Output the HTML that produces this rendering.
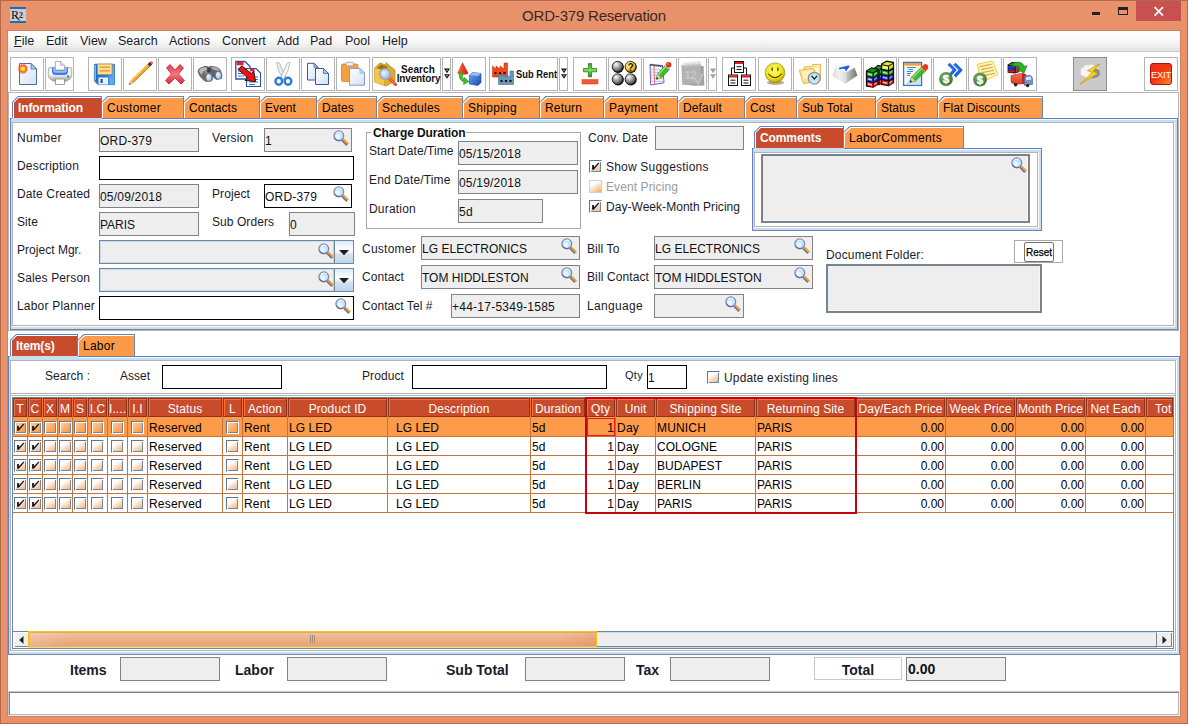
<!DOCTYPE html>
<html><head><meta charset="utf-8"><title>ORD-379 Reservation</title>
<style>
html,body{margin:0;padding:0;}
body{width:1188px;height:724px;overflow:hidden;position:relative;background:#E9916A;font-family:"Liberation Sans",sans-serif;font-size:12px;}
#w{position:absolute;left:0;top:0;width:1188px;height:724px;overflow:hidden;}
#w div,#w svg{position:absolute;box-sizing:border-box;}
#w svg text{font-family:"Liberation Sans",sans-serif;}
.cb{width:13px;height:13px;background:linear-gradient(148deg,#FFFFFF 0%,#FFFFFF 30%,#FDD6B6 62%,#FCA862 100%);border-top:1px solid #5C7894;border-left:1px solid #5C7894;border-right:1px solid #fff;border-bottom:1px solid #fff;box-shadow:inset 1px 1px 0 #fff,inset -1px -1px 0 #6E88A4;}
.cbs{background:linear-gradient(135deg,#FDD2AC 0%,#FCB070 50%,#FB943C 100%);}
.cbd{border:1px solid #C2D2EA;box-shadow:none;background:linear-gradient(148deg,#FFFFFF 0%,#FFFFFF 30%,#FDD6B6 62%,#F9A766 100%);}
</style></head><body><div id="w">
<div style="left:0px;top:0px;width:1188px;height:724px;background:#E9916A;box-shadow:inset 0 0 0 1px #B4684A;"></div>
<div style="left:7px;top:30px;width:1174px;height:687px;background:#D2805A;"></div>
<div style="left:10px;top:7px;width:16px;height:16px;background:#CACDD2;border-top:2px solid #1C6CC0;border-bottom:2px solid #1C6CC0;"></div>
<div style="left:11px;top:8px;line-height:14px;font-size:12px;color:#111;white-space:pre;font-family:'Liberation Serif',serif;">R</div>
<div style="left:19px;top:11px;line-height:9px;font-size:8px;color:#222;white-space:pre;font-family:'Liberation Serif',serif;font-weight:bold;">2</div>
<svg style="left:14px;top:15px" width="8" height="7" viewBox="0 0 8 7"><path d="M1 0.5 L5.5 5.5" stroke="#222" stroke-width="1.1"/></svg>
<div style="left:0px;top:7px;line-height:17px;font-size:15px;color:#3A2A22;white-space:pre;width:1188px;text-align:center;letter-spacing:-0.2px;">ORD-379 Reservation</div>
<div style="left:1136px;top:1px;width:45px;height:20px;background:#C75050;"></div>
<svg style="left:1136px;top:1px" width="45" height="20" viewBox="0 0 45 20"><path d="M18.6 6.2 L27 14.6 M27 6.2 L18.6 14.6" stroke="#fff" stroke-width="1.7" fill="none"/></svg>
<div style="left:1118px;top:7px;width:10px;height:8px;border:1px solid #222;border-top:3px solid #222;"></div>
<div style="left:1092px;top:12px;width:8px;height:3px;background:#222;"></div>
<div style="left:8px;top:31px;width:1172px;height:685px;background:#fff;"></div>
<div style="left:8px;top:31px;width:1172px;height:20px;background:linear-gradient(#FFFFFF 0%,#FBFBFB 40%,#E4E4E4 100%);"></div>
<div style="left:8px;top:51px;width:1172px;height:1px;background:#C8C8C8;"></div>
<div style="left:14px;top:34px;line-height:14px;font-size:12.5px;color:#1A1A2A;white-space:pre;"><span style="text-decoration:underline">F</span>ile</div>
<div style="left:46px;top:34px;line-height:14px;font-size:12.5px;color:#1A1A2A;white-space:pre;">Edit</div>
<div style="left:80px;top:34px;line-height:14px;font-size:12.5px;color:#1A1A2A;white-space:pre;">View</div>
<div style="left:118px;top:34px;line-height:14px;font-size:12.5px;color:#1A1A2A;white-space:pre;">Search</div>
<div style="left:169px;top:34px;line-height:14px;font-size:12.5px;color:#1A1A2A;white-space:pre;">Actions</div>
<div style="left:222px;top:34px;line-height:14px;font-size:12.5px;color:#1A1A2A;white-space:pre;">Convert</div>
<div style="left:277px;top:34px;line-height:14px;font-size:12.5px;color:#1A1A2A;white-space:pre;">Add</div>
<div style="left:310px;top:34px;line-height:14px;font-size:12.5px;color:#1A1A2A;white-space:pre;">Pad</div>
<div style="left:345px;top:34px;line-height:14px;font-size:12.5px;color:#1A1A2A;white-space:pre;">Pool</div>
<div style="left:382px;top:34px;line-height:14px;font-size:12.5px;color:#1A1A2A;white-space:pre;">Help</div>
<div style="left:10px;top:57px;width:34px;height:34px;background:#fff;border:1px solid #B4B4B4;"></div>
<div style="left:45px;top:57px;width:29px;height:34px;background:#fff;border:1px solid #B4B4B4;"></div>
<div style="left:88px;top:57px;width:34px;height:34px;background:#fff;border:1px solid #B4B4B4;"></div>
<div style="left:123px;top:57px;width:34px;height:34px;background:#fff;border:1px solid #B4B4B4;"></div>
<div style="left:158px;top:57px;width:34px;height:34px;background:#fff;border:1px solid #B4B4B4;"></div>
<div style="left:193px;top:57px;width:34px;height:34px;background:#fff;border:1px solid #B4B4B4;"></div>
<div style="left:231px;top:57px;width:34px;height:34px;background:#fff;border:1px solid #B4B4B4;"></div>
<div style="left:266px;top:57px;width:34px;height:34px;background:#fff;border:1px solid #B4B4B4;"></div>
<div style="left:301px;top:57px;width:34px;height:34px;background:#fff;border:1px solid #B4B4B4;"></div>
<div style="left:336px;top:57px;width:34px;height:34px;background:#fff;border:1px solid #B4B4B4;"></div>
<div style="left:372px;top:57px;width:69px;height:34px;background:#fff;border:1px solid #B4B4B4;"></div>
<div style="left:442px;top:57px;width:9px;height:34px;background:#fff;border:1px solid #B4B4B4;"></div>
<div style="left:452px;top:57px;width:34px;height:34px;background:#fff;border:1px solid #B4B4B4;"></div>
<div style="left:489px;top:57px;width:69px;height:34px;background:#fff;border:1px solid #B4B4B4;"></div>
<div style="left:559px;top:57px;width:9px;height:34px;background:#fff;border:1px solid #B4B4B4;"></div>
<div style="left:573px;top:57px;width:34px;height:34px;background:#fff;border:1px solid #B4B4B4;"></div>
<div style="left:608px;top:57px;width:34px;height:34px;background:#fff;border:1px solid #B4B4B4;"></div>
<div style="left:643px;top:57px;width:34px;height:34px;background:#fff;border:1px solid #B4B4B4;"></div>
<div style="left:678px;top:57px;width:29px;height:34px;background:#fff;border:1px solid #B4B4B4;"></div>
<div style="left:708px;top:57px;width:9px;height:34px;background:#fff;border:1px solid #B4B4B4;"></div>
<div style="left:722px;top:57px;width:34px;height:34px;background:#fff;border:1px solid #B4B4B4;"></div>
<div style="left:758px;top:57px;width:34px;height:34px;background:#fff;border:1px solid #B4B4B4;"></div>
<div style="left:793px;top:57px;width:34px;height:34px;background:#fff;border:1px solid #B4B4B4;"></div>
<div style="left:828px;top:57px;width:34px;height:34px;background:#fff;border:1px solid #B4B4B4;"></div>
<div style="left:863px;top:57px;width:34px;height:34px;background:#fff;border:1px solid #B4B4B4;"></div>
<div style="left:898px;top:57px;width:34px;height:34px;background:#fff;border:1px solid #B4B4B4;"></div>
<div style="left:933px;top:57px;width:34px;height:34px;background:#fff;border:1px solid #B4B4B4;"></div>
<div style="left:968px;top:57px;width:34px;height:34px;background:#fff;border:1px solid #B4B4B4;"></div>
<div style="left:1003px;top:57px;width:34px;height:34px;background:#fff;border:1px solid #B4B4B4;"></div>
<div style="left:1144px;top:57px;width:34px;height:34px;background:#fff;border:1px solid #B4B4B4;"></div>
<div style="left:1073px;top:57px;width:34px;height:34px;background:#CACACA;border:1px solid #8C8C8C;"></div>
<svg style="left:0;top:0" width="1188" height="100" viewBox="0 0 1188 100">
<defs>
<linearGradient id="gpage" x1="0" y1="0" x2="1" y2="1"><stop offset="0" stop-color="#FFFFFF"/><stop offset="1" stop-color="#CFE2F6"/></linearGradient>
<radialGradient id="gball" cx="0.36" cy="0.3" r="0.78"><stop offset="0" stop-color="#FFFFFF"/><stop offset="0.3" stop-color="#BEBEBE"/><stop offset="0.7" stop-color="#6A6A6A"/><stop offset="1" stop-color="#222222"/></radialGradient>
<radialGradient id="gyball" cx="0.38" cy="0.32" r="0.8"><stop offset="0" stop-color="#FFFFE0"/><stop offset="0.4" stop-color="#FFD83A"/><stop offset="0.8" stop-color="#E0A010"/><stop offset="1" stop-color="#805000"/></radialGradient>
<radialGradient id="gsmile" cx="0.45" cy="0.4" r="0.68"><stop offset="0" stop-color="#FFFF70"/><stop offset="0.6" stop-color="#F2E21A"/><stop offset="0.85" stop-color="#C4AC08"/><stop offset="1" stop-color="#6E5C00"/></radialGradient>
<radialGradient id="glens" cx="0.4" cy="0.4" r="0.7"><stop offset="0" stop-color="#E8F4FF"/><stop offset="1" stop-color="#88B4E8"/></radialGradient>
<linearGradient id="gred" x1="0" y1="0" x2="0" y2="1"><stop offset="0" stop-color="#E83848"/><stop offset="0.5" stop-color="#F07880"/><stop offset="1" stop-color="#D82838"/></linearGradient>
<linearGradient id="gexit" x1="0" y1="0" x2="1" y2="1"><stop offset="0" stop-color="#E83020"/><stop offset="0.5" stop-color="#F03810"/><stop offset="1" stop-color="#FF9030"/></linearGradient>
<linearGradient id="gprn" x1="0" y1="0" x2="0" y2="1"><stop offset="0" stop-color="#E8E8E8"/><stop offset="0.45" stop-color="#FAFAFA"/><stop offset="1" stop-color="#8C8C8C"/></linearGradient><linearGradient id="gflop" x1="0" y1="0" x2="1" y2="0"><stop offset="0" stop-color="#1C6CC8"/><stop offset="0.6" stop-color="#2A84DC"/><stop offset="1" stop-color="#58B4F2"/></linearGradient>
<linearGradient id="ggreen" x1="0" y1="0" x2="0" y2="1"><stop offset="0" stop-color="#30A020"/><stop offset="0.5" stop-color="#90D870"/><stop offset="1" stop-color="#208010"/></linearGradient>
<linearGradient id="gcube" x1="0" y1="0" x2="1" y2="1"><stop offset="0" stop-color="#70A8F0"/><stop offset="1" stop-color="#1848B0"/></linearGradient>
<linearGradient id="gcone" x1="0" y1="0" x2="1" y2="0"><stop offset="0" stop-color="#FF7040"/><stop offset="1" stop-color="#D01808"/></linearGradient>
<linearGradient id="gkey" x1="0" y1="0" x2="1" y2="1"><stop offset="0" stop-color="#FFFFFF"/><stop offset="1" stop-color="#A0A0A0"/></linearGradient>
<linearGradient id="gkeyL" x1="0" y1="0" x2="1" y2="0"><stop offset="0" stop-color="#D8D8D8"/><stop offset="0.5" stop-color="#F2F2F2"/><stop offset="1" stop-color="#DADADA"/></linearGradient><linearGradient id="gkeyR" x1="0" y1="0" x2="1" y2="0"><stop offset="0" stop-color="#D4D4D4"/><stop offset="1" stop-color="#707070"/></linearGradient><linearGradient id="gtruck" x1="0" y1="0" x2="0" y2="1"><stop offset="0" stop-color="#F87858"/><stop offset="1" stop-color="#D83828"/></linearGradient><radialGradient id="gdollar" cx="0.4" cy="0.35" r="0.8"><stop offset="0" stop-color="#80B070"/><stop offset="1" stop-color="#2A6A2A"/></radialGradient>
</defs>
<path d="M19.5 63.5 H31 L36.5 69 V84.5 H19.5 Z" fill="url(#gpage)" stroke="#3E5C96" stroke-width="0.9"/>
<path d="M31 63.5 V69 H36.5 Z" fill="#A8CCF4" stroke="#3E5C96" stroke-width="0.7"/>
<circle cx="22.8" cy="68.8" r="5.2" fill="#FF5030" opacity="0.45"/><circle cx="22.8" cy="68.8" r="4" fill="#F83C20" opacity="0.9"/>
<polygon points="22.80,64.40 23.53,67.04 25.91,65.69 24.56,68.07 27.20,68.80 24.56,69.53 25.91,71.91 23.53,70.56 22.80,73.20 22.07,70.56 19.69,71.91 21.04,69.53 18.40,68.80 21.04,68.07 19.69,65.69 22.07,67.04" fill="#FFD428"/><circle cx="22.8" cy="68.8" r="1.7" fill="#FFE850"/>
<path d="M48.3 69.5 Q48.3 67.3 50.5 67.3 H69.5 Q71.7 67.3 71.7 69.5 V75.5 Q71.7 78.5 67.5 80.5 Q63 82.6 60 82.6 Q57 82.6 52.5 80.5 Q48.3 78.5 48.3 75.5 Z" fill="url(#gprn)" stroke="#8C8C8C" stroke-width="0.7"/>
<path d="M52 67.6 H68 V71.5 Q68 75 64 75 H56 Q52 75 52 71.5 Z" fill="#3C7AF0"/>
<path d="M53.2 67.6 H66.8 V70.6 Q66.8 72.8 64 72.8 H56 Q53.2 72.8 53.2 70.6 Z" fill="#9CBCF6"/>
<rect x="55" y="68.4" width="9.6" height="2.6" fill="#8C8C98"/>
<path d="M55.4 70 V61.4 H60.6 L64.4 65.2 V70 Z" fill="#fff" stroke="#9A9A9A" stroke-width="0.8"/><path d="M60.6 61.4 V65.2 H64.4" fill="#E8E8E8" stroke="#9A9A9A" stroke-width="0.7"/>
<rect x="55.4" y="79" width="9" height="5.4" fill="#fff" stroke="#8A8A8A" stroke-width="0.8"/>
<circle cx="68.1" cy="76.5" r="1.2" fill="#20A838"/>
<path d="M94.4 64.3 H114.6 V84.6 H98 L94.4 81 Z" fill="url(#gflop)" stroke="#1A62BC" stroke-width="0.7"/><path d="M95.2 65 V80.5" stroke="#BFE0FA" stroke-width="0.9"/>
<rect x="97.5" y="64" width="14.5" height="10.5" fill="#FBE0A0" stroke="#C88830" stroke-width="0.8"/>
<rect x="99.5" y="66.5" width="10.5" height="1.6" fill="#F0A028"/><rect x="99.5" y="70" width="10.5" height="1.6" fill="#F0A028"/>
<rect x="98.5" y="77.5" width="9.5" height="7" fill="#E8F0FA"/><rect x="100.5" y="79" width="2.2" height="4" fill="#2050B0"/>
<rect x="109.5" y="77.5" width="3" height="7" fill="#60A8F0"/>
<path d="M129.4 84.4 L139.5 71.5 L133 79.5 Z" fill="#B0B0B0" opacity="0.5"/><path d="M128.8 84.9 L135.8 74.4 L131 79.9 Z" fill="#C4C4C4" opacity="0.6"/>
<path d="M129 84.8 L131.1 80.5 L149.9 62.1 L152.1 64.3 L133.3 82.8 Z" fill="#F5A61C" stroke="#C27A08" stroke-width="0.5"/>
<path d="M131.7 80.7 L150.2 62.7" stroke="#FFDD80" stroke-width="0.9" fill="none"/>
<path d="M133 82.4 L151.7 64.2" stroke="#D48008" stroke-width="0.8" fill="none"/>
<path d="M129 84.8 L131.1 80.5 L133.3 82.8 Z" fill="#EBCBA0"/><path d="M129 84.8 L129.9 82.9 L130.9 84 Z" fill="#333"/>
<path d="M147.6 64.3 L149.9 62.1 L152.1 64.3 L149.9 66.5 Z" fill="#3A3A3A"/><path d="M149.9 62.1 Q151.6 60.6 152.6 62 Q153.8 63.2 152.1 64.3 Z" fill="#F0604C"/>
<path d="M166.5 68 L170 64.5 L175 70 L180 64.5 L183.5 68 L178.5 74 L184.5 80.5 L181 84 L175 78 L169 84 L165.5 80.5 L171.5 74 Z" fill="url(#gred)" stroke="#C82030" stroke-width="0.8" stroke-linejoin="round"/>
<path d="M198 71.5 Q198 68.5 201.5 67.5 L205 66.3 Q207.5 66 208.5 67.5 L212.5 74.5 Q213.5 78.5 211.5 81 L206 81.5 Q199.5 78 198 71.5 Z" fill="#6C6C6C" stroke="#444" stroke-width="0.5"/>
<path d="M208 67.5 Q209.5 66 212 66.2 L216.5 67.3 Q219.5 68 220.8 71 Q222.8 75 221.5 78.5 L216 79.5 Q212.5 77 211.5 72.5 Z" fill="#646464" stroke="#444" stroke-width="0.5"/>
<path d="M199 71 Q199.4 68.8 201.8 68.1 L205.6 66.9 L207.6 69.6 L203.4 71.2 L201.4 75 Z" fill="#BCBCBC"/>
<path d="M210.2 67.4 L213.6 67 L218 68.3 L219.8 71 L214.2 70 Z" fill="#B0B0B0"/>
<path d="M203.6 71.6 L207.4 70.4 L209.4 73.4 L205.4 74.6 Z" fill="#8A8A8A"/>
<rect x="207.2" y="68.2" width="3.4" height="4.2" rx="0.8" fill="#3E3E3E"/>
<ellipse cx="208.9" cy="77.4" rx="3.2" ry="4" fill="url(#glens)" stroke="#5E6670" stroke-width="0.8"/>
<ellipse cx="218.4" cy="75.3" rx="3.2" ry="4" fill="url(#glens)" stroke="#5E6670" stroke-width="0.8"/>
<path d="M235.8 61.5 H245 L250 66.5 V79 H235.8 Z" fill="#fff" stroke="#2850B0" stroke-width="1.3"/>
<rect x="236.5" y="62" width="7" height="3.2" fill="#E82020"/>
<path d="M238 68.5 H247 M238 71 H247 M238 73.5 H247 M238 76 H244" stroke="#3060C0" stroke-width="0.9"/>
<path d="M246.5 68.5 H256 L260.5 73 V86.5 H246.5 Z" fill="#fff" stroke="#2850B0" stroke-width="1.1"/>
<rect x="250" y="69" width="4.5" height="2.4" fill="#E82020"/>
<path d="M249 77 H258 M249 79.5 H258 M249 82 H258 M249 84.5 H255" stroke="#3060C0" stroke-width="0.9"/>
<path d="M238.2 69.6 L241.8 65.8 L251.4 73.6 L253.8 71 L255.6 81.6 L245 80.4 L247.6 77.6 Z" fill="#F01010" stroke="#111" stroke-width="0.9" stroke-linejoin="round"/>
<path d="M276.6 62.6 Q278.4 62 279.6 63.4 L285.8 77.6 L283.2 79.4 Q277.4 70 276.6 62.6 Z" fill="#ECECEC" stroke="#A4A4A4" stroke-width="0.7"/>
<path d="M290 62.6 Q288.2 62 287 63.4 L280.8 77.6 L283.4 79.4 Q289.2 70 290 62.6 Z" fill="#F6F6F6" stroke="#A4A4A4" stroke-width="0.7"/>
<ellipse cx="278.8" cy="81.2" rx="3.3" ry="3.5" fill="none" stroke="#2A7AD8" stroke-width="2.4"/>
<ellipse cx="288" cy="81.2" rx="3.3" ry="3.5" fill="none" stroke="#2A7AD8" stroke-width="2.4"/>
<path d="M307.5 63.3 H314 L318 67.3 V80 H307.5 Z" fill="url(#gpage)" stroke="#3A5898" stroke-width="1"/><path d="M314 63.3 V67.3 H318 Z" fill="#A8C8F0" stroke="#3A5898" stroke-width="0.7"/>
<path d="M315.5 68.5 H323.5 L328.5 73.5 V84.5 H315.5 Z" fill="url(#gpage)" stroke="#3A5898" stroke-width="1"/><path d="M323.5 68.5 V73.5 H328.5 Z" fill="#A8C8F0" stroke="#3A5898" stroke-width="0.7"/>
<rect x="341.5" y="64" width="16.5" height="17.5" rx="1.5" fill="#F4A040" stroke="#D88020" stroke-width="0.8"/>
<rect x="346" y="62.3" width="7.5" height="3.6" rx="1" fill="#F0F0F0" stroke="#909090" stroke-width="0.7"/>
<path d="M349.5 68.5 H360 L364.5 73 V85.2 H349.5 Z" fill="url(#gpage)" stroke="#8898D8" stroke-width="1"/><path d="M360 68.5 V73 H364.5 Z" fill="#D0E0F8" stroke="#8898D8" stroke-width="0.7"/>
<path d="M374.5 68 L380 63 L386 65 L386 62.5 L390 66 L395 70 L395 81 L386 86 L374.5 82 Z" fill="#DCAA30" stroke="#B88818" stroke-width="0.7"/>
<path d="M377 68 L381 64.5 L388 67 L384 70.5 Z" fill="#9A7410"/>
<path d="M374.5 68 L384 71 L384 85 L374.5 82 Z" fill="#F0C850"/>
<path d="M389 78 L395.5 84.5" stroke="#E84020" stroke-width="3" stroke-linecap="round"/><path d="M389 78 L395 84" stroke="#F8B080" stroke-width="1"/>
<circle cx="385" cy="74" r="5.2" fill="url(#glens)" stroke="#9AA4B0" stroke-width="1.4"/>
<text x="418" y="72.6" font-size="10" font-weight="bold" text-anchor="middle" letter-spacing="0.1" fill="#111">Search</text>
<text x="418.5" y="81.6" font-size="10" font-weight="bold" text-anchor="middle" letter-spacing="-0.15" fill="#111">Inventory</text>
<polygon points="444,68.6 450,68.6 447,73.2" fill="#111"/><polygon points="444,74.2 450,74.2 447,78.8" fill="#111"/>
<polygon points="446,69.7 448,69.7 447,71.2" fill="#ddd"/><polygon points="446,75.3 448,75.3 447,76.8" fill="#ddd"/>
<polygon points="561,68.6 567,68.6 564,73.2" fill="#111"/><polygon points="561,74.2 567,74.2 564,78.8" fill="#111"/>
<polygon points="563,69.7 565,69.7 564,71.2" fill="#ddd"/><polygon points="563,75.3 565,75.3 564,76.8" fill="#ddd"/>
<polygon points="710,68.6 716,68.6 713,73.2" fill="#A0A0A0"/><polygon points="710,74.2 716,74.2 713,78.8" fill="#A0A0A0"/>
<path d="M462.5 62 L468.5 73.5 Q463 76 457 73.5 Z" fill="url(#gcone)"/>
<path d="M459.5 72 Q458 80 464 82 L463.5 84.5 L469 81.5 L464.5 77.5 L464.3 79.5 Q461.5 78 462.5 73 Z" fill="#40C030" stroke="#209018" stroke-width="0.6"/>
<path d="M469.5 75 L472.5 72.5 L481 73.5 L481 82.5 L478 85.5 L469.5 84 Z" fill="url(#gcube)" stroke="#1840A0" stroke-width="0.6"/>
<path d="M469.5 75 L472.5 72.5 L481 73.5 L478 76 Z" fill="#90C0F8"/>
<path d="M492.5 77 V66 L496 69 V66 L500 69 V66 L504 69 V63 H507.5 V77 Z" fill="#F04818" stroke="#D03008" stroke-width="0.6"/>
<rect x="494.5" y="72" width="2" height="2" fill="#111"/><rect x="499" y="72" width="2" height="2" fill="#111"/><rect x="503.5" y="72" width="2" height="2" fill="#111"/>
<path d="M498.5 84.5 V74 L502 77 V74 L506 77 V74 L510 77 V71 H513.5 V84.5 Z" fill="#6C94B4" stroke="#4A7090" stroke-width="0.6"/>
<rect x="500.5" y="80" width="2" height="2" fill="#111"/><rect x="505" y="80" width="2" height="2" fill="#111"/><rect x="509.5" y="80" width="2" height="2" fill="#111"/>
<text x="516" y="77.8" font-size="10.5" font-weight="bold" textLength="41" lengthAdjust="spacingAndGlyphs" fill="#111">Sub Rent</text>
<path d="M588.4 63.6 H591.6 V68.6 H596.6 V71.8 H591.6 V76.8 H588.4 V71.8 H583.4 V68.6 H588.4 Z" fill="url(#ggreen)" stroke="#208018" stroke-width="0.8"/>
<rect x="582" y="79.5" width="16" height="4.5" fill="#F05830" stroke="#E03818" stroke-width="0.5"/>
<circle cx="618.1" cy="67.3" r="5.7" fill="#111"/>
<circle cx="617.6" cy="66.7" r="5.4" fill="url(#gball)" stroke="#111" stroke-width="0.8"/>
<circle cx="618.1" cy="79.8" r="5.7" fill="#111"/>
<circle cx="617.6" cy="79.2" r="5.4" fill="url(#gball)" stroke="#111" stroke-width="0.8"/>
<circle cx="631.0" cy="79.8" r="5.7" fill="#111"/>
<circle cx="630.5" cy="79.2" r="5.4" fill="url(#gball)" stroke="#111" stroke-width="0.8"/>
<circle cx="631.0" cy="67.3" r="5.7" fill="#111"/>
<circle cx="630.5" cy="66.7" r="5.4" fill="url(#gyball)" stroke="#111" stroke-width="0.8"/>
<text x="630.6" y="70.6" font-size="10" font-weight="bold" text-anchor="middle" fill="#111">?</text>
<path d="M650 64.6 L662.6 66 L664 82.8 L650.6 85 Z" fill="#F4F8FF" stroke="#6C5CC4" stroke-width="1"/>
<path d="M651 69 L663 70.3 M651 72 L663.2 73.2 M651 75 L663.4 76 M651 78 L663.6 78.8 M651 81 L663.8 81.6" stroke="#8CB4F2" stroke-width="0.7"/>
<path d="M654 65.2 L654.6 84.2" stroke="#F07060" stroke-width="1"/>
<path d="M650.4 64.8 L662.8 66.2" stroke="#333" stroke-width="2.2" stroke-dasharray="1.1,0.9"/>
<path d="M656.2 79.4 L657.4 74 L665.4 65.2 L669.8 69 L661.4 78 Z" fill="#3CBC24" stroke="#1C7C0C" stroke-width="0.6"/>
<path d="M658.4 74.6 L666 66.2" stroke="#A4EC90" stroke-width="1.2"/>
<path d="M656.2 79.4 L657.4 74 L661.4 78 Z" fill="#E8C49C"/><path d="M656.2 79.4 L656.8 77 L658.4 78.6 Z" fill="#222"/>
<path d="M664.6 66 L666 64.6 L670.4 68.4 L669 69.8 Z" fill="#D8D8D8"/>
<circle cx="668.6" cy="64.8" r="2.8" fill="#E42C18"/><circle cx="667.8" cy="64" r="1" fill="#F88070"/>
<path d="M684.5 67 L703.6 66 L704.4 85.4 L694 85.8 L684.5 84.6 Z" fill="#A2A2A2"/>
<path d="M681.8 65.4 L700.6 64 L701.6 83.6 L682.4 84.4 Z" fill="#B2B2B2" stroke="#A0A0A0" stroke-width="0.5"/>
<ellipse cx="684.4" cy="64.6" rx="0.9" ry="2" fill="none" stroke="#D4D4D4" stroke-width="1"/>
<ellipse cx="687.4" cy="64.38" rx="0.9" ry="2" fill="none" stroke="#D4D4D4" stroke-width="1"/>
<ellipse cx="690.4" cy="64.16" rx="0.9" ry="2" fill="none" stroke="#D4D4D4" stroke-width="1"/>
<ellipse cx="693.4" cy="63.94" rx="0.9" ry="2" fill="none" stroke="#D4D4D4" stroke-width="1"/>
<ellipse cx="696.4" cy="63.71999999999999" rx="0.9" ry="2" fill="none" stroke="#D4D4D4" stroke-width="1"/>
<ellipse cx="699.4" cy="63.49999999999999" rx="0.9" ry="2" fill="none" stroke="#D4D4D4" stroke-width="1"/>
<text x="690.6" y="79.4" font-size="11" font-weight="bold" text-anchor="middle" fill="#C8C8C8">12</text>
<path d="M694.6 78.6 L698.2 83.6 L703.2 73" stroke="#C4C4C4" stroke-width="1.7" fill="none"/>
<path d="M731.5 75 V68 H746.5 V75" fill="none" stroke="#111" stroke-width="1"/>
<rect x="734.5" y="61.5" width="9" height="11" fill="#fff" stroke="#111" stroke-width="1"/>
<rect x="735.0" y="62.0" width="8" height="2" fill="#E81818"/>
<path d="M736.5 66.7 H741.5 M736.5 69.5 H741.5" stroke="#111" stroke-width="1"/>
<rect x="728.5" y="75" width="9" height="10.5" fill="#fff" stroke="#111" stroke-width="1"/>
<rect x="729.0" y="75.5" width="8" height="2" fill="#E81818"/>
<path d="M730.5 80.2 H735.5 M730.5 83 H735.5" stroke="#111" stroke-width="1"/>
<rect x="741.5" y="75" width="9" height="10.5" fill="#fff" stroke="#111" stroke-width="1"/>
<rect x="742.0" y="75.5" width="8" height="2" fill="#E81818"/>
<path d="M743.5 80.2 H748.5 M743.5 83 H748.5" stroke="#111" stroke-width="1"/>
<ellipse cx="775.5" cy="82.6" rx="8.6" ry="2.4" fill="#5A4A00" opacity="0.45"/>
<circle cx="775" cy="72.7" r="9.8" fill="url(#gsmile)" stroke="#8A7A10" stroke-width="0.6"/>
<ellipse cx="772.2" cy="69.2" rx="0.75" ry="2" fill="#4A4A10"/><ellipse cx="777.9" cy="69.2" rx="0.75" ry="2" fill="#4A4A10"/>
<path d="M768.6 74 Q775 81.6 781.4 74" fill="none" stroke="#4A3A08" stroke-width="1.1" stroke-linecap="round"/>
<path d="M804.2 67 L811.5 66.5 L812.5 64.5 L820.5 64.3 L820.5 80 L804.2 82 Z" fill="#FCE9A4" stroke="#E8A428" stroke-width="0.8"/>
<path d="M806 68.5 L818.5 67.5 L818.5 80 L806 81 Z" fill="#FFFBE4"/>
<path d="M799.3 70.4 L812 68.4 Q814 68.6 814.4 70 L817 81 L803.6 83.6 Z" fill="#FDE58C" stroke="#E8A020" stroke-width="0.8"/>
<path d="M801 71.6 L811.5 70 L813 76 L803 79 Z" fill="#FFF4C4" opacity="0.8"/>
<circle cx="814.3" cy="78.2" r="5.9" fill="#C4E6FA" stroke="#8C90A4" stroke-width="1.3"/>
<path d="M811.6 75.8 L814.3 79 L817.2 75.8" fill="none" stroke="#1A1A24" stroke-width="1.2"/>
<path d="M835.5 67.3 L845.7 72.6 L845.3 83.7 L832.4 76.1 Z" fill="url(#gkeyL)"/>
<path d="M854.5 67.5 L845.7 72.6 L845.3 83.7 L857.4 75.5 Z" fill="url(#gkeyR)"/>
<path d="M835.5 67.3 L844.4 63.8 L854.5 67.5 L845.7 72.6 Z" fill="#FAFAFA" stroke="#E4E4E4" stroke-width="0.5"/>
<path d="M839.2 68.6 L848.6 66.4 L845.4 70.8 M841.8 68 Q845 67.8 846.8 68.8" fill="none" stroke="#1C5CDC" stroke-width="1.7" stroke-linejoin="round"/>
<path d="M874.5 68.5 L877.86 65.5 L882.5 66.7 L882.5 81.7 L879.14 84.7 L874.5 83.5 Z" fill="#111" stroke="#111" stroke-width="1.3" stroke-linejoin="round"/>
<path d="M875.0 68.5 L877.86 66.0 L882.0 67.1 L879.14 69.8 Z" fill="#18A018"/>
<path d="M875.0 69.4 L878.74 70.6 L878.74 74.4 L875.0 73.2 Z" fill="#18A018"/>
<path d="M879.64 70.6 L882.0 69.0 L882.0 72.0 L879.64 74.4 Z" fill="#18A018"/>
<path d="M875.9 70.5 L877.9399999999999 71.5 L877.9399999999999 73.2 L875.9 72.2 Z" fill="#B0E8B0"/>
<path d="M880.34 71.3 L881.1 69.3 L881.1 70.9 L880.34 73.1 Z" fill="#B0E8B0" opacity="0.8"/>
<path d="M875.0 74.4 L878.74 75.6 L878.74 79.4 L875.0 78.2 Z" fill="#2828D8"/>
<path d="M879.64 75.6 L882.0 74.0 L882.0 77.0 L879.64 79.4 Z" fill="#2828D8"/>
<path d="M875.9 75.5 L877.9399999999999 76.5 L877.9399999999999 78.2 L875.9 77.2 Z" fill="#C0C4FF"/>
<path d="M880.34 76.3 L881.1 74.3 L881.1 75.9 L880.34 78.1 Z" fill="#C0C4FF" opacity="0.8"/>
<path d="M875.0 79.4 L878.74 80.6 L878.74 84.4 L875.0 83.2 Z" fill="#E01818"/>
<path d="M879.64 80.6 L882.0 79.0 L882.0 82.0 L879.64 84.4 Z" fill="#E01818"/>
<path d="M875.9 80.5 L877.9399999999999 81.5 L877.9399999999999 83.2 L875.9 82.2 Z" fill="#FFC0C0"/>
<path d="M880.34 81.3 L881.1 79.3 L881.1 80.9 L880.34 83.1 Z" fill="#FFC0C0" opacity="0.8"/>
<path d="M866.5 71 L871.33 68.0 L878.0 69.2 L878.0 84.2 L873.17 87.2 L866.5 86.0 Z" fill="#111" stroke="#111" stroke-width="1.3" stroke-linejoin="round"/>
<path d="M867.0 71 L871.33 68.5 L877.5 69.6 L873.17 72.3 Z" fill="#109010"/>
<path d="M867.0 71.9 L872.77 73.1 L872.77 76.9 L867.0 75.7 Z" fill="#18A018"/>
<path d="M873.67 73.1 L877.5 71.5 L877.5 74.5 L873.67 76.9 Z" fill="#18A018"/>
<path d="M867.9 73.0 L871.9699999999999 74.0 L871.9699999999999 75.7 L867.9 74.7 Z" fill="#B0E8B0"/>
<path d="M874.37 73.8 L876.6 71.8 L876.6 73.4 L874.37 75.6 Z" fill="#B0E8B0" opacity="0.8"/>
<path d="M867.0 76.9 L872.77 78.1 L872.77 81.9 L867.0 80.7 Z" fill="#2828D8"/>
<path d="M873.67 78.1 L877.5 76.5 L877.5 79.5 L873.67 81.9 Z" fill="#2828D8"/>
<path d="M867.9 78.0 L871.9699999999999 79.0 L871.9699999999999 80.7 L867.9 79.7 Z" fill="#C0C4FF"/>
<path d="M874.37 78.8 L876.6 76.8 L876.6 78.4 L874.37 80.6 Z" fill="#C0C4FF" opacity="0.8"/>
<path d="M867.0 81.9 L872.77 83.1 L872.77 86.9 L867.0 85.7 Z" fill="#E01818"/>
<path d="M873.67 83.1 L877.5 81.5 L877.5 84.5 L873.67 86.9 Z" fill="#E01818"/>
<path d="M867.9 83.0 L871.9699999999999 84.0 L871.9699999999999 85.7 L867.9 84.7 Z" fill="#FFC0C0"/>
<path d="M874.37 83.8 L876.6 81.8 L876.6 83.4 L874.37 85.6 Z" fill="#FFC0C0" opacity="0.8"/>
<path d="M881.5 69.4 L886.54 66.4 L893.5 67.60000000000001 L893.5 82.60000000000001 L888.46 85.60000000000001 L881.5 84.4 Z" fill="#111" stroke="#111" stroke-width="1.3" stroke-linejoin="round"/>
<path d="M882.0 69.4 L886.54 66.9 L893.0 68.0 L888.46 70.7 Z" fill="#18A018"/>
<path d="M882.0 70.30000000000001 L888.0600000000001 71.5 L888.0600000000001 75.30000000000001 L882.0 74.10000000000001 Z" fill="#18A018"/>
<path d="M888.96 71.5 L893.0 69.9 L893.0 72.9 L888.96 75.30000000000001 Z" fill="#18A018"/>
<path d="M882.9 71.4 L887.26 72.4 L887.26 74.10000000000001 L882.9 73.10000000000001 Z" fill="#B0E8B0"/>
<path d="M889.6600000000001 72.2 L892.1 70.2 L892.1 71.80000000000001 L889.6600000000001 74.0 Z" fill="#B0E8B0" opacity="0.8"/>
<path d="M882.0 75.30000000000001 L888.0600000000001 76.5 L888.0600000000001 80.30000000000001 L882.0 79.10000000000001 Z" fill="#2828D8"/>
<path d="M888.96 76.5 L893.0 74.9 L893.0 77.9 L888.96 80.30000000000001 Z" fill="#2828D8"/>
<path d="M882.9 76.4 L887.26 77.4 L887.26 79.10000000000001 L882.9 78.10000000000001 Z" fill="#C0C4FF"/>
<path d="M889.6600000000001 77.2 L892.1 75.2 L892.1 76.80000000000001 L889.6600000000001 79.0 Z" fill="#C0C4FF" opacity="0.8"/>
<path d="M882.0 80.30000000000001 L888.0600000000001 81.5 L888.0600000000001 85.30000000000001 L882.0 84.10000000000001 Z" fill="#E01818"/>
<path d="M888.96 81.5 L893.0 79.9 L893.0 82.9 L888.96 85.30000000000001 Z" fill="#E01818"/>
<path d="M882.9 81.4 L887.26 82.4 L887.26 84.10000000000001 L882.9 83.10000000000001 Z" fill="#FFC0C0"/>
<path d="M889.6600000000001 82.2 L892.1 80.2 L892.1 81.80000000000001 L889.6600000000001 84.0 Z" fill="#FFC0C0" opacity="0.8"/>
<path d="M881.5 64 L886.5 61.2 L893.5 62.4 L893.5 67.6 L888.5 70.6 L881.5 69.4 Z" fill="#111" stroke="#111" stroke-width="1.2" stroke-linejoin="round"/>
<path d="M882.2 64.2 L886.6 61.9 L892.8 62.9 L888.4 65.4 Z" fill="#E8E828"/>
<path d="M882.2 65.2 L888 66.4 L888 69.8 L882.2 68.7 Z" fill="#F4F470"/><path d="M889 66.3 L893 63.9 L893 67.3 L889 69.7 Z" fill="#D8D820"/>
<rect x="903.6" y="62.4" width="18" height="23" fill="#F8FBFF" stroke="#2878D0" stroke-width="1.3"/>
<path d="M912 76 H921 V84.8 H905 Z" fill="#C4D8F2" opacity="0.8"/>
<rect x="904.3" y="63" width="16.6" height="2.7" fill="#FF9E2C"/>
<path d="M906.8 67.5 H916 M908.4 69.5 H913 M906.8 71.5 H913 M906.8 73.5 H911 M906.8 75.4 H910" stroke="#2878D0" stroke-width="0.9"/>
<path d="M909.8 82.4 L911.4 77.2 L921.6 66.8 L925.8 70.8 L915.4 81 Z" fill="#46B830" stroke="#1E7C10" stroke-width="0.6"/>
<path d="M912.6 77.6 L922.6 67.6" stroke="#A0E890" stroke-width="1.1"/>
<path d="M909.8 82.4 L911.4 77.2 L915.4 81 Z" fill="#F0D080"/><path d="M909.8 82.4 L910.5 80 L912.2 81.6 Z" fill="#1A1A1A"/>
<path d="M921 67.4 L924 64.4 Q926.6 63.4 928 65.6 Q929 68 927.2 69.4 L925.4 71.4 Z" fill="#E83820"/><path d="M921 67.4 L925.4 71.4" stroke="#E8B020" stroke-width="0.9"/>
<path d="M948.6 63.8 L954.6 70 L949.4 75.8" fill="none" stroke="#1C64E0" stroke-width="3.2" stroke-linejoin="miter"/>
<path d="M954.4 63.8 L960.6 70 L954.8 76.4" fill="none" stroke="#1C64E0" stroke-width="3.2" stroke-linejoin="miter"/>
<path d="M948 64.6 L953.2 70" fill="none" stroke="#70A8F8" stroke-width="0.9"/><path d="M953.8 64.6 L959.2 70" fill="none" stroke="#70A8F8" stroke-width="0.9"/>
<circle cx="946" cy="79" r="6.9" fill="url(#gdollar)"/><text x="946" y="83.2" font-size="11.5" font-weight="bold" text-anchor="middle" fill="#fff" stroke="#fff" stroke-width="0.35">$</text>
<path d="M977.4 64.2 L992.6 61 L997.8 74.6 L987 79.6 L980.6 79.8 Z" fill="#FFF6B4" stroke="#F2C428" stroke-width="0.9"/>
<path d="M980 66.6 L991.6 64.2 M981 69.6 L992.8 67.2 M982.2 72.6 L994 70.2 M983.4 75.6 L995 73.2" stroke="#CCAA50" stroke-width="1.1"/>
<circle cx="980" cy="79.5" r="6.9" fill="url(#gdollar)"/><text x="980" y="83.7" font-size="11.5" font-weight="bold" text-anchor="middle" fill="#fff" stroke="#fff" stroke-width="0.35">$</text>
<path d="M1007.6 64.5 L1012 62 L1019.5 63 L1019.5 72 L1015 73.6 L1007.6 72.8 Z" fill="#111"/>
<path d="M1008.3 65 L1012 63 L1018.8 63.8 L1015 65.8 Z" fill="#20A020"/><rect x="1008.3" y="66" width="6.4" height="2" fill="#2838D8"/><rect x="1008.3" y="68.4" width="6.4" height="1.8" fill="#2838D8"/><rect x="1008.3" y="70.6" width="6.4" height="1.8" fill="#E02020"/><path d="M1015.6 66 L1018.8 64.6 V71.4 L1015.6 72.8 Z" fill="#C03030"/>
<path d="M1012.6 63.4 Q1021.6 59.8 1024.4 66.6 L1027 65.6 L1024 73 L1017.6 69.6 L1020.2 68.6 Q1018.6 65 1013 66.4 Z" fill="#2CB424" stroke="#0C680C" stroke-width="0.6"/>
<path d="M1011 75.6 L1022 73.2 L1026 74.6 L1026 83.4 L1015 84.4 L1011 82.4 Z" fill="url(#gtruck)" stroke="#B02818" stroke-width="0.6"/>
<path d="M1022 73.2 L1026 74.6 V83.4 L1022 84 Z" fill="#C02818"/>
<path d="M1024.4 76.2 L1030 75.2 Q1032.6 76.4 1032.6 79.4 V84.4 L1024.4 85.4 Z" fill="#7890C0" stroke="#485888" stroke-width="0.6"/><path d="M1026 77.2 L1030.6 76.6 L1031.4 79.6 L1026 80.2 Z" fill="#D4E4F8"/>
<circle cx="1015.6" cy="84.8" r="1.7" fill="#222"/><circle cx="1027.6" cy="85.6" r="1.7" fill="#222"/>
<path d="M1080.5 72 Q1079.5 68 1083.5 67.2 Q1084.5 64 1088.8 65 Q1092 63 1094.6 65.8 Q1098.8 66.2 1099 70.4 Q1100.6 74 1097 75.8 Q1094.4 78.4 1090.6 76.8 Q1086.4 79 1083.8 76.2 Q1080 75.6 1080.5 72 Z" fill="#F6F6F6" stroke="#C4C4C4" stroke-width="0.5"/>
<path d="M1094 68.5 Q1099.6 68 1100 72.6 Q1100 77.4 1095.4 77.8 Q1091.6 79.4 1089.4 77 Z" fill="#8E8E8E"/>
<path d="M1099.8 63.8 L1087.4 70.6 L1092.2 72.6 L1079.8 84.2 L1098 73.4 L1093 71.4 Z" fill="#FAD21E" stroke="#C49408" stroke-width="0.7" stroke-linejoin="round"/>
<rect x="1150.5" y="63.5" width="21" height="21" rx="2.5" fill="url(#gexit)" stroke="#B01010" stroke-width="1"/>
<text x="1161" y="78" font-size="9.5" text-anchor="middle" letter-spacing="-0.3" fill="#fff">EXIT</text>
</svg>
<div style="left:8px;top:92px;width:1171px;height:239px;border:1px solid #B4B4B4;"></div>
<div style="left:10px;top:118px;width:1168px;height:212px;background:#6F869C;"></div>
<div style="left:10px;top:118px;width:1167px;height:1px;background:#5F80C8;"></div>
<div style="left:10px;top:118px;width:1px;height:211px;background:#5F80C8;"></div>
<div style="left:11px;top:119px;width:1166px;height:210px;background:#C8DDF2;"></div>
<div style="left:11px;top:119px;width:1166px;height:1px;background:#F4F9FF;"></div>
<div style="left:12px;top:118px;width:90px;height:2px;background:#C8DDF2;"></div>
<div style="left:12px;top:122px;width:1163px;height:205px;background:#fff;"></div>
<div style="left:12px;top:122px;width:1162px;height:204px;background:#fff;border:1px solid #B4B4B4;"></div>
<svg style="left:12px;top:96px" width="90" height="22" viewBox="0 0 90 22"><polygon points="0,22 0,6 6,0 90,0 90,22" fill="#5F80C8"/><polygon points="1,22 1,6.4 6.4,1 89,1 89,22" fill="#fff"/><polygon points="2,22 2,6.8 6.8,2 89,2 89,22" fill="#C84B2B"/></svg>
<div style="left:18px;top:101px;line-height:14px;font-size:12px;color:#fff;white-space:pre;font-weight:bold;letter-spacing:-0.1px;">Information</div>
<svg style="left:102px;top:96px" width="82" height="22" viewBox="0 0 82 22"><polygon points="0,22 0,5.5 5.5,0 82,0 82,22" fill="#6F869C"/><polygon points="0,22 0,6.7 6.3,1 81,1 81,22" fill="#fff"/><polygon points="1,22 1,7.3 7.1,2 81,2 81,22" fill="#FC9A48"/></svg>
<div style="left:107px;top:101px;line-height:14px;font-size:12px;color:#000;white-space:pre;letter-spacing:0.248px;">Customer</div>
<svg style="left:184px;top:96px" width="76" height="22" viewBox="0 0 76 22"><polygon points="0,22 0,5.5 5.5,0 76,0 76,22" fill="#6F869C"/><polygon points="0,22 0,6.7 6.3,1 75,1 75,22" fill="#fff"/><polygon points="1,22 1,7.3 7.1,2 75,2 75,22" fill="#FC9A48"/></svg>
<div style="left:189px;top:101px;line-height:14px;font-size:12px;color:#000;white-space:pre;letter-spacing:0.081px;">Contacts</div>
<svg style="left:260px;top:96px" width="57" height="22" viewBox="0 0 57 22"><polygon points="0,22 0,5.5 5.5,0 57,0 57,22" fill="#6F869C"/><polygon points="0,22 0,6.7 6.3,1 56,1 56,22" fill="#fff"/><polygon points="1,22 1,7.3 7.1,2 56,2 56,22" fill="#FC9A48"/></svg>
<div style="left:265px;top:101px;line-height:14px;font-size:12px;color:#000;white-space:pre;letter-spacing:0.063px;">Event</div>
<svg style="left:317px;top:96px" width="60" height="22" viewBox="0 0 60 22"><polygon points="0,22 0,5.5 5.5,0 60,0 60,22" fill="#6F869C"/><polygon points="0,22 0,6.7 6.3,1 59,1 59,22" fill="#fff"/><polygon points="1,22 1,7.3 7.1,2 59,2 59,22" fill="#FC9A48"/></svg>
<div style="left:322px;top:101px;line-height:14px;font-size:12px;color:#000;white-space:pre;letter-spacing:0.13px;">Dates</div>
<svg style="left:377px;top:96px" width="86" height="22" viewBox="0 0 86 22"><polygon points="0,22 0,5.5 5.5,0 86,0 86,22" fill="#6F869C"/><polygon points="0,22 0,6.7 6.3,1 85,1 85,22" fill="#fff"/><polygon points="1,22 1,7.3 7.1,2 85,2 85,22" fill="#FC9A48"/></svg>
<div style="left:382px;top:101px;line-height:14px;font-size:12px;color:#000;white-space:pre;letter-spacing:0.218px;">Schedules</div>
<svg style="left:463px;top:96px" width="77" height="22" viewBox="0 0 77 22"><polygon points="0,22 0,5.5 5.5,0 77,0 77,22" fill="#6F869C"/><polygon points="0,22 0,6.7 6.3,1 76,1 76,22" fill="#fff"/><polygon points="1,22 1,7.3 7.1,2 76,2 76,22" fill="#FC9A48"/></svg>
<div style="left:468px;top:101px;line-height:14px;font-size:12px;color:#000;white-space:pre;letter-spacing:0.287px;">Shipping</div>
<svg style="left:540px;top:96px" width="64" height="22" viewBox="0 0 64 22"><polygon points="0,22 0,5.5 5.5,0 64,0 64,22" fill="#6F869C"/><polygon points="0,22 0,6.7 6.3,1 63,1 63,22" fill="#fff"/><polygon points="1,22 1,7.3 7.1,2 63,2 63,22" fill="#FC9A48"/></svg>
<div style="left:545px;top:101px;line-height:14px;font-size:12px;color:#000;white-space:pre;letter-spacing:0.164px;">Return</div>
<svg style="left:604px;top:96px" width="74" height="22" viewBox="0 0 74 22"><polygon points="0,22 0,5.5 5.5,0 74,0 74,22" fill="#6F869C"/><polygon points="0,22 0,6.7 6.3,1 73,1 73,22" fill="#fff"/><polygon points="1,22 1,7.3 7.1,2 73,2 73,22" fill="#FC9A48"/></svg>
<div style="left:609px;top:101px;line-height:14px;font-size:12px;color:#000;white-space:pre;letter-spacing:0.235px;">Payment</div>
<svg style="left:678px;top:96px" width="67" height="22" viewBox="0 0 67 22"><polygon points="0,22 0,5.5 5.5,0 67,0 67,22" fill="#6F869C"/><polygon points="0,22 0,6.7 6.3,1 66,1 66,22" fill="#fff"/><polygon points="1,22 1,7.3 7.1,2 66,2 66,22" fill="#FC9A48"/></svg>
<div style="left:683px;top:101px;line-height:14px;font-size:12px;color:#000;white-space:pre;letter-spacing:0.14px;">Default</div>
<svg style="left:745px;top:96px" width="52" height="22" viewBox="0 0 52 22"><polygon points="0,22 0,5.5 5.5,0 52,0 52,22" fill="#6F869C"/><polygon points="0,22 0,6.7 6.3,1 51,1 51,22" fill="#fff"/><polygon points="1,22 1,7.3 7.1,2 51,2 51,22" fill="#FC9A48"/></svg>
<div style="left:750px;top:101px;line-height:14px;font-size:12px;color:#000;white-space:pre;letter-spacing:0.082px;">Cost</div>
<svg style="left:797px;top:96px" width="79" height="22" viewBox="0 0 79 22"><polygon points="0,22 0,5.5 5.5,0 79,0 79,22" fill="#6F869C"/><polygon points="0,22 0,6.7 6.3,1 78,1 78,22" fill="#fff"/><polygon points="1,22 1,7.3 7.1,2 78,2 78,22" fill="#FC9A48"/></svg>
<div style="left:802px;top:101px;line-height:14px;font-size:12px;color:#000;white-space:pre;letter-spacing:0.071px;">Sub Total</div>
<svg style="left:876px;top:96px" width="62" height="22" viewBox="0 0 62 22"><polygon points="0,22 0,5.5 5.5,0 62,0 62,22" fill="#6F869C"/><polygon points="0,22 0,6.7 6.3,1 61,1 61,22" fill="#fff"/><polygon points="1,22 1,7.3 7.1,2 61,2 61,22" fill="#FC9A48"/></svg>
<div style="left:881px;top:101px;line-height:14px;font-size:12px;color:#000;white-space:pre;letter-spacing:-0.003px;">Status</div>
<svg style="left:938px;top:96px" width="105" height="22" viewBox="0 0 105 22"><polygon points="0,22 0,5.5 5.5,0 105,0 105,22" fill="#6F869C"/><polygon points="0,22 0,6.7 6.3,1 104,1 104,22" fill="#fff"/><polygon points="1,22 1,7.3 7.1,2 104,2 104,22" fill="#FC9A48"/></svg>
<div style="left:943px;top:101px;line-height:14px;font-size:12px;color:#000;white-space:pre;letter-spacing:0.07px;">Flat Discounts</div>
<div style="left:17px;top:131px;line-height:14px;font-size:12px;color:#1A1A2A;white-space:pre;letter-spacing:0.387px;">Number</div>
<div style="left:17px;top:159px;line-height:14px;font-size:12px;color:#1A1A2A;white-space:pre;letter-spacing:0.18px;">Description</div>
<div style="left:17px;top:187px;line-height:14px;font-size:12px;color:#1A1A2A;white-space:pre;letter-spacing:0.136px;">Date Created</div>
<div style="left:17px;top:215px;line-height:14px;font-size:12px;color:#1A1A2A;white-space:pre;letter-spacing:0.081px;">Site</div>
<div style="left:17px;top:243px;line-height:14px;font-size:12px;color:#1A1A2A;white-space:pre;letter-spacing:0.027px;">Project Mgr.</div>
<div style="left:17px;top:271px;line-height:14px;font-size:12px;color:#1A1A2A;white-space:pre;letter-spacing:0.136px;">Sales Person</div>
<div style="left:17px;top:299px;line-height:14px;font-size:12px;color:#1A1A2A;white-space:pre;letter-spacing:0.201px;">Labor Planner</div>
<div style="left:99px;top:128px;width:100px;height:24px;background:#EEEEEE;border:1px solid #828282;"></div>
<div style="left:100px;top:134px;line-height:14px;font-size:12px;color:#111;white-space:pre;letter-spacing:0.188px;">ORD-379</div>
<div style="left:99px;top:156px;width:255px;height:24px;background:#fff;border:1px solid #000;"></div>
<div style="left:99px;top:184px;width:100px;height:24px;background:#EEEEEE;border:1px solid #828282;"></div>
<div style="left:100px;top:190px;line-height:14px;font-size:12px;color:#111;white-space:pre;letter-spacing:0.194px;">05/09/2018</div>
<div style="left:99px;top:212px;width:100px;height:24px;background:#EEEEEE;border:1px solid #828282;"></div>
<div style="left:100px;top:218px;line-height:14px;font-size:12px;color:#111;white-space:pre;letter-spacing:-0.002px;">PARIS</div>
<div style="left:212px;top:131px;line-height:14px;font-size:12px;color:#1A1A2A;white-space:pre;letter-spacing:0.188px;">Version</div>
<div style="left:264px;top:128px;width:88px;height:24px;background:#EEEEEE;border:1px solid #828282;"></div>
<div style="left:265px;top:134px;line-height:14px;font-size:12px;color:#111;white-space:pre;letter-spacing:0.326px;">1</div>
<svg style="left:333px;top:130px" width="17" height="17" viewBox="0 0 17 17"><line x1="9.4" y1="9.9" x2="14.4" y2="14.9" stroke="#6E6E9E" stroke-width="3" stroke-linecap="butt"/><line x1="10.2" y1="9.2" x2="15.2" y2="14.2" stroke="#F4A02C" stroke-width="2" stroke-linecap="butt"/><circle cx="5.8" cy="5.8" r="4.9" fill="#BEE6FA" stroke="#8686AA" stroke-width="1.25"/><path d="M1.4 7.6 A4.9 4.9 0 0 0 8.4 10" stroke="#6C6C94" stroke-width="1.2" fill="none"/><circle cx="4.9" cy="6.7" r="2.5" fill="#E6F7FF"/><path d="M2.8 3.8 A4 4 0 0 1 8.8 3.2" stroke="#fff" stroke-width="0.9" fill="none" opacity="0.9"/></svg>
<div style="left:212px;top:187px;line-height:14px;font-size:12px;color:#1A1A2A;white-space:pre;letter-spacing:0.093px;">Project</div>
<div style="left:264px;top:184px;width:88px;height:24px;background:#fff;border:1px solid #000;"></div>
<div style="left:265px;top:190px;line-height:14px;font-size:12px;color:#111;white-space:pre;letter-spacing:0.188px;">ORD-379</div>
<svg style="left:333px;top:186px" width="17" height="17" viewBox="0 0 17 17"><line x1="9.4" y1="9.9" x2="14.4" y2="14.9" stroke="#6E6E9E" stroke-width="3" stroke-linecap="butt"/><line x1="10.2" y1="9.2" x2="15.2" y2="14.2" stroke="#F4A02C" stroke-width="2" stroke-linecap="butt"/><circle cx="5.8" cy="5.8" r="4.9" fill="#BEE6FA" stroke="#8686AA" stroke-width="1.25"/><path d="M1.4 7.6 A4.9 4.9 0 0 0 8.4 10" stroke="#6C6C94" stroke-width="1.2" fill="none"/><circle cx="4.9" cy="6.7" r="2.5" fill="#E6F7FF"/><path d="M2.8 3.8 A4 4 0 0 1 8.8 3.2" stroke="#fff" stroke-width="0.9" fill="none" opacity="0.9"/></svg>
<div style="left:212px;top:215px;line-height:14px;font-size:12px;color:#1A1A2A;white-space:pre;letter-spacing:0.064px;">Sub Orders</div>
<div style="left:289px;top:212px;width:66px;height:24px;background:#EEEEEE;border:1px solid #828282;"></div>
<div style="left:290px;top:218px;line-height:14px;font-size:12px;color:#111;white-space:pre;letter-spacing:0.326px;">0</div>
<div style="left:99px;top:240px;width:255px;height:24px;background:#EEEEEE;border:1px solid #6F88A0;box-shadow:inset 0 0 0 1px #CADDF0;"></div>
<div style="left:333px;top:241px;width:1px;height:22px;background:#B4CCE6;"></div>
<div style="left:334px;top:241px;width:19px;height:22px;background:linear-gradient(#DDE9F5 0%,#F6FAFE 30%,#FFFFFF 45%,#D6E4F2 60%,#BFD3E8 100%);border-left:1px solid #6F88A0;"></div>
<svg style="left:339px;top:250px" width="10" height="6" viewBox="0 0 10 6"><polygon points="0,0 10,0 5,5.2" fill="#1E1E1E"/></svg>
<svg style="left:318px;top:243px" width="17" height="17" viewBox="0 0 17 17"><line x1="9.4" y1="9.9" x2="14.4" y2="14.9" stroke="#6E6E9E" stroke-width="3" stroke-linecap="butt"/><line x1="10.2" y1="9.2" x2="15.2" y2="14.2" stroke="#F4A02C" stroke-width="2" stroke-linecap="butt"/><circle cx="5.8" cy="5.8" r="4.9" fill="#BEE6FA" stroke="#8686AA" stroke-width="1.25"/><path d="M1.4 7.6 A4.9 4.9 0 0 0 8.4 10" stroke="#6C6C94" stroke-width="1.2" fill="none"/><circle cx="4.9" cy="6.7" r="2.5" fill="#E6F7FF"/><path d="M2.8 3.8 A4 4 0 0 1 8.8 3.2" stroke="#fff" stroke-width="0.9" fill="none" opacity="0.9"/></svg>
<div style="left:99px;top:268px;width:255px;height:24px;background:#EEEEEE;border:1px solid #6F88A0;box-shadow:inset 0 0 0 1px #CADDF0;"></div>
<div style="left:333px;top:269px;width:1px;height:22px;background:#B4CCE6;"></div>
<div style="left:334px;top:269px;width:19px;height:22px;background:linear-gradient(#DDE9F5 0%,#F6FAFE 30%,#FFFFFF 45%,#D6E4F2 60%,#BFD3E8 100%);border-left:1px solid #6F88A0;"></div>
<svg style="left:339px;top:278px" width="10" height="6" viewBox="0 0 10 6"><polygon points="0,0 10,0 5,5.2" fill="#1E1E1E"/></svg>
<svg style="left:318px;top:271px" width="17" height="17" viewBox="0 0 17 17"><line x1="9.4" y1="9.9" x2="14.4" y2="14.9" stroke="#6E6E9E" stroke-width="3" stroke-linecap="butt"/><line x1="10.2" y1="9.2" x2="15.2" y2="14.2" stroke="#F4A02C" stroke-width="2" stroke-linecap="butt"/><circle cx="5.8" cy="5.8" r="4.9" fill="#BEE6FA" stroke="#8686AA" stroke-width="1.25"/><path d="M1.4 7.6 A4.9 4.9 0 0 0 8.4 10" stroke="#6C6C94" stroke-width="1.2" fill="none"/><circle cx="4.9" cy="6.7" r="2.5" fill="#E6F7FF"/><path d="M2.8 3.8 A4 4 0 0 1 8.8 3.2" stroke="#fff" stroke-width="0.9" fill="none" opacity="0.9"/></svg>
<div style="left:99px;top:296px;width:255px;height:24px;background:#fff;border:1px solid #000;"></div>
<svg style="left:335px;top:298px" width="17" height="17" viewBox="0 0 17 17"><line x1="9.4" y1="9.9" x2="14.4" y2="14.9" stroke="#6E6E9E" stroke-width="3" stroke-linecap="butt"/><line x1="10.2" y1="9.2" x2="15.2" y2="14.2" stroke="#F4A02C" stroke-width="2" stroke-linecap="butt"/><circle cx="5.8" cy="5.8" r="4.9" fill="#BEE6FA" stroke="#8686AA" stroke-width="1.25"/><path d="M1.4 7.6 A4.9 4.9 0 0 0 8.4 10" stroke="#6C6C94" stroke-width="1.2" fill="none"/><circle cx="4.9" cy="6.7" r="2.5" fill="#E6F7FF"/><path d="M2.8 3.8 A4 4 0 0 1 8.8 3.2" stroke="#fff" stroke-width="0.9" fill="none" opacity="0.9"/></svg>
<div style="left:366px;top:132px;width:215px;height:97px;border:1px solid #A8A8A8;"></div>
<div style="left:371px;top:130px;width:95px;height:10px;background:#fff;"></div>
<div style="left:373px;top:126px;line-height:14px;font-size:12px;color:#111;white-space:pre;font-weight:bold;letter-spacing:-0.1px;">Charge Duration</div>
<div style="left:369px;top:144px;line-height:14px;font-size:12px;color:#1A1A2A;white-space:pre;letter-spacing:0.065px;">Start Date/Time</div>
<div style="left:458px;top:141px;width:120px;height:24px;background:#EEEEEE;border:1px solid #828282;"></div>
<div style="left:459px;top:147px;line-height:14px;font-size:12px;color:#111;white-space:pre;letter-spacing:0.194px;">05/15/2018</div>
<div style="left:369px;top:173px;line-height:14px;font-size:12px;color:#1A1A2A;white-space:pre;letter-spacing:0.151px;">End Date/Time</div>
<div style="left:458px;top:170px;width:120px;height:24px;background:#EEEEEE;border:1px solid #828282;"></div>
<div style="left:459px;top:176px;line-height:14px;font-size:12px;color:#111;white-space:pre;letter-spacing:0.194px;">05/19/2018</div>
<div style="left:369px;top:202px;line-height:14px;font-size:12px;color:#1A1A2A;white-space:pre;letter-spacing:0.205px;">Duration</div>
<div style="left:458px;top:199px;width:85px;height:24px;background:#EEEEEE;border:1px solid #828282;"></div>
<div style="left:459px;top:205px;line-height:14px;font-size:12px;color:#111;white-space:pre;letter-spacing:0.326px;">5d</div>
<div style="left:588px;top:131px;line-height:14px;font-size:12px;color:#1A1A2A;white-space:pre;letter-spacing:0.097px;">Conv. Date</div>
<div style="left:655px;top:126px;width:89px;height:24px;background:#EEEEEE;border:1px solid #828282;"></div>
<div class="cb" style="left:589px;top:160px;"></div>
<svg style="left:589px;top:160px" width="13" height="13" viewBox="0 0 13 13"><path d="M3.1 5.1 H4.9 V7.3 L9.5 2.6 L10.2 3.4 L4.8 9.7 H3.1 Z" fill="#14181E"/></svg>
<div style="left:606px;top:160px;line-height:14px;font-size:12px;color:#1A1A2A;white-space:pre;letter-spacing:0.2px;">Show Suggestions</div>
<div class="cb cbd" style="left:589px;top:180px;"></div>
<div style="left:606px;top:180px;line-height:14px;font-size:12px;color:#9A9A9A;white-space:pre;letter-spacing:0.1px;">Event Pricing</div>
<div class="cb" style="left:589px;top:200px;"></div>
<svg style="left:589px;top:200px" width="13" height="13" viewBox="0 0 13 13"><path d="M3.1 5.1 H4.9 V7.3 L9.5 2.6 L10.2 3.4 L4.8 9.7 H3.1 Z" fill="#14181E"/></svg>
<div style="left:606px;top:200px;line-height:14px;font-size:12px;color:#1A1A2A;white-space:pre;letter-spacing:0.04px;">Day-Week-Month Pricing</div>
<div style="left:752px;top:148px;width:290px;height:83px;background:#6F869C;"></div>
<div style="left:752px;top:148px;width:289px;height:1px;background:#5F80C8;"></div>
<div style="left:752px;top:148px;width:1px;height:82px;background:#5F80C8;"></div>
<div style="left:753px;top:149px;width:288px;height:81px;background:#C8DDF2;"></div>
<div style="left:753px;top:149px;width:288px;height:1px;background:#F4F9FF;"></div>
<div style="left:754px;top:148px;width:90px;height:2px;background:#C8DDF2;"></div>
<div style="left:754px;top:152px;width:285px;height:76px;background:#fff;"></div>
<div style="left:754px;top:152px;width:284px;height:75px;background:#fff;border:1px solid #B4B4B4;"></div>
<svg style="left:754px;top:126px" width="90" height="22" viewBox="0 0 90 22"><polygon points="0,22 0,6 6,0 90,0 90,22" fill="#5F80C8"/><polygon points="1,22 1,6.4 6.4,1 89,1 89,22" fill="#fff"/><polygon points="2,22 2,6.8 6.8,2 89,2 89,22" fill="#C84B2B"/></svg>
<div style="left:760px;top:131px;line-height:14px;font-size:12px;color:#fff;white-space:pre;font-weight:bold;letter-spacing:-0.1px;">Comments</div>
<svg style="left:844px;top:126px" width="120" height="22" viewBox="0 0 120 22"><polygon points="0,22 0,5.5 5.5,0 120,0 120,22" fill="#6F869C"/><polygon points="0,22 0,6.7 6.3,1 119,1 119,22" fill="#fff"/><polygon points="1,22 1,7.3 7.1,2 119,2 119,22" fill="#FC9A48"/></svg>
<div style="left:849px;top:131px;line-height:14px;font-size:12px;color:#000;white-space:pre;letter-spacing:0.33px;">LaborComments</div>
<div style="left:761px;top:154px;width:269px;height:69px;background:#EEEEEE;border:1px solid #6F869C;box-shadow:inset 1px 1px 0 #7E7E7E,inset -1px -1px 0 #808080,inset -2px -2px 0 #F8F8F8;"></div>
<svg style="left:1011px;top:157px" width="17" height="17" viewBox="0 0 17 17"><line x1="9.4" y1="9.9" x2="14.4" y2="14.9" stroke="#6E6E9E" stroke-width="3" stroke-linecap="butt"/><line x1="10.2" y1="9.2" x2="15.2" y2="14.2" stroke="#F4A02C" stroke-width="2" stroke-linecap="butt"/><circle cx="5.8" cy="5.8" r="4.9" fill="#BEE6FA" stroke="#8686AA" stroke-width="1.25"/><path d="M1.4 7.6 A4.9 4.9 0 0 0 8.4 10" stroke="#6C6C94" stroke-width="1.2" fill="none"/><circle cx="4.9" cy="6.7" r="2.5" fill="#E6F7FF"/><path d="M2.8 3.8 A4 4 0 0 1 8.8 3.2" stroke="#fff" stroke-width="0.9" fill="none" opacity="0.9"/></svg>
<div style="left:362px;top:242px;line-height:14px;font-size:12px;color:#1A1A2A;white-space:pre;letter-spacing:0.248px;">Customer</div>
<div style="left:421px;top:236px;width:159px;height:24px;background:#EEEEEE;border:1px solid #828282;"></div>
<div style="left:422px;top:242px;line-height:14px;font-size:12px;color:#111;white-space:pre;letter-spacing:0.022px;">LG ELECTRONICS</div>
<svg style="left:561px;top:238px" width="17" height="17" viewBox="0 0 17 17"><line x1="9.4" y1="9.9" x2="14.4" y2="14.9" stroke="#6E6E9E" stroke-width="3" stroke-linecap="butt"/><line x1="10.2" y1="9.2" x2="15.2" y2="14.2" stroke="#F4A02C" stroke-width="2" stroke-linecap="butt"/><circle cx="5.8" cy="5.8" r="4.9" fill="#BEE6FA" stroke="#8686AA" stroke-width="1.25"/><path d="M1.4 7.6 A4.9 4.9 0 0 0 8.4 10" stroke="#6C6C94" stroke-width="1.2" fill="none"/><circle cx="4.9" cy="6.7" r="2.5" fill="#E6F7FF"/><path d="M2.8 3.8 A4 4 0 0 1 8.8 3.2" stroke="#fff" stroke-width="0.9" fill="none" opacity="0.9"/></svg>
<div style="left:362px;top:270px;line-height:14px;font-size:12px;color:#1A1A2A;white-space:pre;letter-spacing:0.092px;">Contact</div>
<div style="left:421px;top:265px;width:159px;height:24px;background:#EEEEEE;border:1px solid #828282;"></div>
<div style="left:422px;top:271px;line-height:14px;font-size:12px;color:#111;white-space:pre;letter-spacing:-0.024px;">TOM HIDDLESTON</div>
<svg style="left:561px;top:267px" width="17" height="17" viewBox="0 0 17 17"><line x1="9.4" y1="9.9" x2="14.4" y2="14.9" stroke="#6E6E9E" stroke-width="3" stroke-linecap="butt"/><line x1="10.2" y1="9.2" x2="15.2" y2="14.2" stroke="#F4A02C" stroke-width="2" stroke-linecap="butt"/><circle cx="5.8" cy="5.8" r="4.9" fill="#BEE6FA" stroke="#8686AA" stroke-width="1.25"/><path d="M1.4 7.6 A4.9 4.9 0 0 0 8.4 10" stroke="#6C6C94" stroke-width="1.2" fill="none"/><circle cx="4.9" cy="6.7" r="2.5" fill="#E6F7FF"/><path d="M2.8 3.8 A4 4 0 0 1 8.8 3.2" stroke="#fff" stroke-width="0.9" fill="none" opacity="0.9"/></svg>
<div style="left:362px;top:299px;line-height:14px;font-size:12px;color:#1A1A2A;white-space:pre;letter-spacing:0.049px;">Contact Tel #</div>
<div style="left:451px;top:294px;width:129px;height:24px;background:#EEEEEE;border:1px solid #828282;"></div>
<div style="left:452px;top:300px;line-height:14px;font-size:12px;color:#111;white-space:pre;letter-spacing:0.245px;">+44-17-5349-1585</div>
<div style="left:587px;top:242px;line-height:14px;font-size:12px;color:#1A1A2A;white-space:pre;letter-spacing:0.094px;">Bill To</div>
<div style="left:654px;top:236px;width:159px;height:24px;background:#EEEEEE;border:1px solid #828282;"></div>
<div style="left:655px;top:242px;line-height:14px;font-size:12px;color:#111;white-space:pre;letter-spacing:0.022px;">LG ELECTRONICS</div>
<svg style="left:794px;top:238px" width="17" height="17" viewBox="0 0 17 17"><line x1="9.4" y1="9.9" x2="14.4" y2="14.9" stroke="#6E6E9E" stroke-width="3" stroke-linecap="butt"/><line x1="10.2" y1="9.2" x2="15.2" y2="14.2" stroke="#F4A02C" stroke-width="2" stroke-linecap="butt"/><circle cx="5.8" cy="5.8" r="4.9" fill="#BEE6FA" stroke="#8686AA" stroke-width="1.25"/><path d="M1.4 7.6 A4.9 4.9 0 0 0 8.4 10" stroke="#6C6C94" stroke-width="1.2" fill="none"/><circle cx="4.9" cy="6.7" r="2.5" fill="#E6F7FF"/><path d="M2.8 3.8 A4 4 0 0 1 8.8 3.2" stroke="#fff" stroke-width="0.9" fill="none" opacity="0.9"/></svg>
<div style="left:587px;top:270px;line-height:14px;font-size:12px;color:#1A1A2A;white-space:pre;letter-spacing:0.109px;">Bill Contact</div>
<div style="left:654px;top:265px;width:159px;height:24px;background:#EEEEEE;border:1px solid #828282;"></div>
<div style="left:655px;top:271px;line-height:14px;font-size:12px;color:#111;white-space:pre;letter-spacing:-0.024px;">TOM HIDDLESTON</div>
<svg style="left:794px;top:267px" width="17" height="17" viewBox="0 0 17 17"><line x1="9.4" y1="9.9" x2="14.4" y2="14.9" stroke="#6E6E9E" stroke-width="3" stroke-linecap="butt"/><line x1="10.2" y1="9.2" x2="15.2" y2="14.2" stroke="#F4A02C" stroke-width="2" stroke-linecap="butt"/><circle cx="5.8" cy="5.8" r="4.9" fill="#BEE6FA" stroke="#8686AA" stroke-width="1.25"/><path d="M1.4 7.6 A4.9 4.9 0 0 0 8.4 10" stroke="#6C6C94" stroke-width="1.2" fill="none"/><circle cx="4.9" cy="6.7" r="2.5" fill="#E6F7FF"/><path d="M2.8 3.8 A4 4 0 0 1 8.8 3.2" stroke="#fff" stroke-width="0.9" fill="none" opacity="0.9"/></svg>
<div style="left:587px;top:299px;line-height:14px;font-size:12px;color:#1A1A2A;white-space:pre;letter-spacing:0.326px;">Language</div>
<div style="left:654px;top:294px;width:90px;height:24px;background:#EEEEEE;border:1px solid #828282;"></div>
<svg style="left:725px;top:296px" width="17" height="17" viewBox="0 0 17 17"><line x1="9.4" y1="9.9" x2="14.4" y2="14.9" stroke="#6E6E9E" stroke-width="3" stroke-linecap="butt"/><line x1="10.2" y1="9.2" x2="15.2" y2="14.2" stroke="#F4A02C" stroke-width="2" stroke-linecap="butt"/><circle cx="5.8" cy="5.8" r="4.9" fill="#BEE6FA" stroke="#8686AA" stroke-width="1.25"/><path d="M1.4 7.6 A4.9 4.9 0 0 0 8.4 10" stroke="#6C6C94" stroke-width="1.2" fill="none"/><circle cx="4.9" cy="6.7" r="2.5" fill="#E6F7FF"/><path d="M2.8 3.8 A4 4 0 0 1 8.8 3.2" stroke="#fff" stroke-width="0.9" fill="none" opacity="0.9"/></svg>
<div style="left:826px;top:248px;line-height:14px;font-size:12px;color:#1A1A2A;white-space:pre;letter-spacing:0.164px;">Document Folder:</div>
<div style="left:1014px;top:240px;width:49px;height:23px;border:1px solid #ABABAB;background:#fff;"></div>
<div style="left:1024px;top:242px;width:30px;height:20px;border:1px solid #7C706C;border-radius:2px;background:#fff;"></div>
<div style="left:1024px;top:247px;line-height:11px;font-size:10px;color:#000;white-space:pre;width:30px;text-align:center;-webkit-text-stroke:0.25px #000;">Reset</div>
<div style="left:826px;top:264px;width:216px;height:49px;background:#EEEEEE;border:1px solid #6F869C;box-shadow:inset 1px 1px 0 #7E7E7E,inset -1px -1px 0 #808080,inset -2px -2px 0 #F8F8F8;"></div>
<div style="left:8px;top:356px;width:1172px;height:299px;background:#6F869C;"></div>
<div style="left:8px;top:356px;width:1171px;height:1px;background:#5F80C8;"></div>
<div style="left:8px;top:356px;width:1px;height:298px;background:#5F80C8;"></div>
<div style="left:9px;top:357px;width:1170px;height:297px;background:#C8DDF2;"></div>
<div style="left:9px;top:357px;width:1170px;height:1px;background:#F4F9FF;"></div>
<div style="left:10px;top:356px;width:68px;height:2px;background:#C8DDF2;"></div>
<div style="left:10px;top:360px;width:1167px;height:292px;background:#fff;"></div>
<div style="left:10px;top:360px;width:1166px;height:291px;background:#fff;border:1px solid #B4B4B4;"></div>
<svg style="left:10px;top:334px" width="68" height="22" viewBox="0 0 68 22"><polygon points="0,22 0,6 6,0 68,0 68,22" fill="#5F80C8"/><polygon points="1,22 1,6.4 6.4,1 67,1 67,22" fill="#fff"/><polygon points="2,22 2,6.8 6.8,2 67,2 67,22" fill="#C84B2B"/></svg>
<div style="left:16px;top:339px;line-height:14px;font-size:12px;color:#fff;white-space:pre;font-weight:bold;letter-spacing:-0.1px;">Item(s)</div>
<svg style="left:78px;top:334px" width="57" height="22" viewBox="0 0 57 22"><polygon points="0,22 0,5.5 5.5,0 57,0 57,22" fill="#6F869C"/><polygon points="0,22 0,6.7 6.3,1 56,1 56,22" fill="#fff"/><polygon points="1,22 1,7.3 7.1,2 56,2 56,22" fill="#FC9A48"/></svg>
<div style="left:83px;top:339px;line-height:14px;font-size:12px;color:#000;white-space:pre;letter-spacing:0.262px;">Labor</div>
<div style="left:10px;top:393px;width:1166px;height:1px;background:#B4B4B4;"></div>
<div style="left:10px;top:395px;width:1166px;height:1px;background:#B4B4B4;"></div>
<div style="left:45px;top:369px;line-height:14px;font-size:12px;color:#1A1A2A;white-space:pre;letter-spacing:0.039px;">Search :</div>
<div style="left:120px;top:369px;line-height:14px;font-size:12px;color:#1A1A2A;white-space:pre;letter-spacing:-0.002px;">Asset</div>
<div style="left:162px;top:365px;width:120px;height:24px;background:#fff;border:1px solid #000;"></div>
<div style="left:362px;top:369px;line-height:14px;font-size:12px;color:#1A1A2A;white-space:pre;letter-spacing:0.092px;">Product</div>
<div style="left:412px;top:365px;width:195px;height:24px;background:#fff;border:1px solid #000;"></div>
<div style="left:625px;top:369px;line-height:12px;font-size:11px;color:#1A1A2A;white-space:pre;letter-spacing:0.296px;">Qty</div>
<div style="left:647px;top:365px;width:40px;height:24px;background:#fff;border:1px solid #000;"></div>
<div style="left:648px;top:371px;line-height:14px;font-size:12px;color:#111;white-space:pre;letter-spacing:0.326px;">1</div>
<div class="cb" style="left:707px;top:371px;"></div>
<div style="left:724px;top:371px;line-height:14px;font-size:12px;color:#1A1A2A;white-space:pre;letter-spacing:0.156px;">Update existing lines</div>
<div style="left:12px;top:397px;width:1162px;height:252px;background:#fff;border:1px solid #6F869C;"></div>
<div style="left:13px;top:398px;width:1160px;height:19px;background:#FA6E3A;"></div>
<div style="left:13px;top:398px;width:14px;height:19px;border:1px solid #8E3418;background:#C84B2B;overflow:hidden;box-shadow:inset 1px 1px 0 #FA6E3A;"><div style="left:0;top:3px;width:12px;text-align:center;font-size:12px;line-height:14px;color:#fff;white-space:pre;letter-spacing:0.1px;">T</div></div>
<div style="left:28px;top:398px;width:14px;height:19px;border:1px solid #8E3418;background:#C84B2B;overflow:hidden;box-shadow:inset 1px 1px 0 #FA6E3A;"><div style="left:0;top:3px;width:12px;text-align:center;font-size:12px;line-height:14px;color:#fff;white-space:pre;letter-spacing:0.1px;">C</div></div>
<div style="left:43px;top:398px;width:14px;height:19px;border:1px solid #8E3418;background:#C84B2B;overflow:hidden;box-shadow:inset 1px 1px 0 #FA6E3A;"><div style="left:0;top:3px;width:12px;text-align:center;font-size:12px;line-height:14px;color:#fff;white-space:pre;letter-spacing:0.1px;">X</div></div>
<div style="left:58px;top:398px;width:14px;height:19px;border:1px solid #8E3418;background:#C84B2B;overflow:hidden;box-shadow:inset 1px 1px 0 #FA6E3A;"><div style="left:0;top:3px;width:12px;text-align:center;font-size:12px;line-height:14px;color:#fff;white-space:pre;letter-spacing:0.1px;">M</div></div>
<div style="left:73px;top:398px;width:14px;height:19px;border:1px solid #8E3418;background:#C84B2B;overflow:hidden;box-shadow:inset 1px 1px 0 #FA6E3A;"><div style="left:0;top:3px;width:12px;text-align:center;font-size:12px;line-height:14px;color:#fff;white-space:pre;letter-spacing:0.1px;">S</div></div>
<div style="left:88px;top:398px;width:19px;height:19px;border:1px solid #8E3418;background:#C84B2B;overflow:hidden;box-shadow:inset 1px 1px 0 #FA6E3A;"><div style="left:0;top:3px;width:17px;text-align:center;font-size:12px;line-height:14px;color:#fff;white-space:pre;letter-spacing:0.1px;">I.C</div></div>
<div style="left:108px;top:398px;width:19px;height:19px;border:1px solid #8E3418;background:#C84B2B;overflow:hidden;box-shadow:inset 1px 1px 0 #FA6E3A;"><div style="left:0;top:3px;width:17px;text-align:center;font-size:12px;line-height:14px;color:#fff;white-space:pre;letter-spacing:0.1px;">I....</div></div>
<div style="left:128px;top:398px;width:19px;height:19px;border:1px solid #8E3418;background:#C84B2B;overflow:hidden;box-shadow:inset 1px 1px 0 #FA6E3A;"><div style="left:0;top:3px;width:17px;text-align:center;font-size:12px;line-height:14px;color:#fff;white-space:pre;letter-spacing:0.1px;">I.I</div></div>
<div style="left:148px;top:398px;width:74px;height:19px;border:1px solid #8E3418;background:#C84B2B;overflow:hidden;box-shadow:inset 1px 1px 0 #FA6E3A;"><div style="left:0;top:3px;width:72px;text-align:center;font-size:12px;line-height:14px;color:#fff;white-space:pre;letter-spacing:0.1px;">Status</div></div>
<div style="left:223px;top:398px;width:19px;height:19px;border:1px solid #8E3418;background:#C84B2B;overflow:hidden;box-shadow:inset 1px 1px 0 #FA6E3A;"><div style="left:0;top:3px;width:17px;text-align:center;font-size:12px;line-height:14px;color:#fff;white-space:pre;letter-spacing:0.1px;">L</div></div>
<div style="left:243px;top:398px;width:44px;height:19px;border:1px solid #8E3418;background:#C84B2B;overflow:hidden;box-shadow:inset 1px 1px 0 #FA6E3A;"><div style="left:0;top:3px;width:42px;text-align:center;font-size:12px;line-height:14px;color:#fff;white-space:pre;letter-spacing:0.1px;">Action</div></div>
<div style="left:288px;top:398px;width:99px;height:19px;border:1px solid #8E3418;background:#C84B2B;overflow:hidden;box-shadow:inset 1px 1px 0 #FA6E3A;"><div style="left:0;top:3px;width:97px;text-align:center;font-size:12px;line-height:14px;color:#fff;white-space:pre;letter-spacing:0.1px;">Product ID</div></div>
<div style="left:388px;top:398px;width:142px;height:19px;border:1px solid #8E3418;background:#C84B2B;overflow:hidden;box-shadow:inset 1px 1px 0 #FA6E3A;"><div style="left:0;top:3px;width:140px;text-align:center;font-size:12px;line-height:14px;color:#fff;white-space:pre;letter-spacing:0.1px;">Description</div></div>
<div style="left:531px;top:398px;width:54px;height:19px;border:1px solid #8E3418;background:#C84B2B;overflow:hidden;box-shadow:inset 1px 1px 0 #FA6E3A;"><div style="left:0;top:3px;width:52px;text-align:center;font-size:12px;line-height:14px;color:#fff;white-space:pre;letter-spacing:0.1px;">Duration</div></div>
<div style="left:586px;top:398px;width:29px;height:19px;border:1px solid #8E3418;background:#C84B2B;overflow:hidden;box-shadow:inset 1px 1px 0 #FA6E3A;"><div style="left:0;top:3px;width:27px;text-align:center;font-size:12px;line-height:14px;color:#fff;white-space:pre;letter-spacing:0.1px;">Qty</div></div>
<div style="left:616px;top:398px;width:39px;height:19px;border:1px solid #8E3418;background:#C84B2B;overflow:hidden;box-shadow:inset 1px 1px 0 #FA6E3A;"><div style="left:0;top:3px;width:37px;text-align:center;font-size:12px;line-height:14px;color:#fff;white-space:pre;letter-spacing:0.1px;">Unit</div></div>
<div style="left:656px;top:398px;width:99px;height:19px;border:1px solid #8E3418;background:#C84B2B;overflow:hidden;box-shadow:inset 1px 1px 0 #FA6E3A;"><div style="left:0;top:3px;width:97px;text-align:center;font-size:12px;line-height:14px;color:#fff;white-space:pre;letter-spacing:0.1px;">Shipping Site</div></div>
<div style="left:756px;top:398px;width:99px;height:19px;border:1px solid #8E3418;background:#C84B2B;overflow:hidden;box-shadow:inset 1px 1px 0 #FA6E3A;"><div style="left:0;top:3px;width:97px;text-align:center;font-size:12px;line-height:14px;color:#fff;white-space:pre;letter-spacing:0.1px;">Returning Site</div></div>
<div style="left:856px;top:398px;width:89px;height:19px;border:1px solid #8E3418;background:#C84B2B;overflow:hidden;box-shadow:inset 1px 1px 0 #FA6E3A;"><div style="left:0;top:3px;width:87px;text-align:center;font-size:12px;line-height:14px;color:#fff;white-space:pre;letter-spacing:0.1px;">Day/Each Price</div></div>
<div style="left:946px;top:398px;width:69px;height:19px;border:1px solid #8E3418;background:#C84B2B;overflow:hidden;box-shadow:inset 1px 1px 0 #FA6E3A;"><div style="left:0;top:3px;width:67px;text-align:center;font-size:12px;line-height:14px;color:#fff;white-space:pre;letter-spacing:0.1px;">Week Price</div></div>
<div style="left:1016px;top:398px;width:69px;height:19px;border:1px solid #8E3418;background:#C84B2B;overflow:hidden;box-shadow:inset 1px 1px 0 #FA6E3A;"><div style="left:0;top:3px;width:67px;text-align:center;font-size:12px;line-height:14px;color:#fff;white-space:pre;letter-spacing:0.1px;">Month Price</div></div>
<div style="left:1086px;top:398px;width:59px;height:19px;border:1px solid #8E3418;background:#C84B2B;overflow:hidden;box-shadow:inset 1px 1px 0 #FA6E3A;"><div style="left:0;top:3px;width:57px;text-align:center;font-size:12px;line-height:14px;color:#fff;white-space:pre;letter-spacing:0.1px;">Net Each</div></div>
<div style="left:1146px;top:398px;width:27px;height:19px;border:1px solid #8E3418;background:#C84B2B;overflow:hidden;box-shadow:inset 1px 1px 0 #FA6E3A;"><div style="left:8px;top:3px;font-size:12px;line-height:14px;color:#fff;white-space:pre;letter-spacing:0.2px;">Tot</div></div>
<div style="left:13px;top:417px;width:1160px;height:19px;background:#FD9B4A;"></div>
<div style="left:13px;top:436px;width:1160px;height:1px;background:#C8733A;"></div>
<div style="left:27px;top:417px;width:1px;height:20px;background:#C8733A;"></div>
<div style="left:42px;top:417px;width:1px;height:20px;background:#C8733A;"></div>
<div style="left:57px;top:417px;width:1px;height:20px;background:#C8733A;"></div>
<div style="left:72px;top:417px;width:1px;height:20px;background:#C8733A;"></div>
<div style="left:87px;top:417px;width:1px;height:20px;background:#C8733A;"></div>
<div style="left:107px;top:417px;width:1px;height:20px;background:#C8733A;"></div>
<div style="left:127px;top:417px;width:1px;height:20px;background:#C8733A;"></div>
<div style="left:147px;top:417px;width:1px;height:20px;background:#C8733A;"></div>
<div style="left:222px;top:417px;width:1px;height:20px;background:#C8733A;"></div>
<div style="left:242px;top:417px;width:1px;height:20px;background:#C8733A;"></div>
<div style="left:287px;top:417px;width:1px;height:20px;background:#C8733A;"></div>
<div style="left:387px;top:417px;width:1px;height:20px;background:#C8733A;"></div>
<div style="left:530px;top:417px;width:1px;height:20px;background:#C8733A;"></div>
<div style="left:585px;top:417px;width:1px;height:20px;background:#C8733A;"></div>
<div style="left:615px;top:417px;width:1px;height:20px;background:#C8733A;"></div>
<div style="left:655px;top:417px;width:1px;height:20px;background:#C8733A;"></div>
<div style="left:755px;top:417px;width:1px;height:20px;background:#C8733A;"></div>
<div style="left:855px;top:417px;width:1px;height:20px;background:#C8733A;"></div>
<div style="left:945px;top:417px;width:1px;height:20px;background:#C8733A;"></div>
<div style="left:1015px;top:417px;width:1px;height:20px;background:#C8733A;"></div>
<div style="left:1085px;top:417px;width:1px;height:20px;background:#C8733A;"></div>
<div style="left:1145px;top:417px;width:1px;height:20px;background:#C8733A;"></div>
<div class="cb cbs" style="left:14px;top:421px;"></div>
<svg style="left:14px;top:421px" width="13" height="13" viewBox="0 0 13 13"><path d="M3.1 5.1 H4.9 V7.3 L9.5 2.6 L10.2 3.4 L4.8 9.7 H3.1 Z" fill="#14181E"/></svg>
<div class="cb cbs" style="left:29px;top:421px;"></div>
<svg style="left:29px;top:421px" width="13" height="13" viewBox="0 0 13 13"><path d="M3.1 5.1 H4.9 V7.3 L9.5 2.6 L10.2 3.4 L4.8 9.7 H3.1 Z" fill="#14181E"/></svg>
<div class="cb cbs" style="left:44px;top:421px;"></div>
<div class="cb cbs" style="left:59px;top:421px;"></div>
<div class="cb cbs" style="left:74px;top:421px;"></div>
<div class="cb cbs" style="left:91px;top:421px;"></div>
<div class="cb cbs" style="left:111px;top:421px;"></div>
<div class="cb cbs" style="left:131px;top:421px;"></div>
<div style="left:149px;top:421px;line-height:14px;font-size:12px;color:#000;white-space:pre;letter-spacing:0.205px;">Reserved</div>
<div class="cb cbs" style="left:226px;top:421px;"></div>
<div style="left:244px;top:421px;line-height:14px;font-size:12px;color:#000;white-space:pre;letter-spacing:0.163px;">Rent</div>
<div style="left:289px;top:421px;line-height:14px;font-size:12px;color:#000;white-space:pre;letter-spacing:0.052px;">LG LED</div>
<div style="left:396px;top:421px;line-height:14px;font-size:12px;color:#000;white-space:pre;letter-spacing:0.052px;">LG LED</div>
<div style="left:532px;top:421px;line-height:14px;font-size:12px;color:#000;white-space:pre;">5d</div>
<div style="left:586px;top:421px;line-height:14px;font-size:12px;color:#000;white-space:pre;width:28px;text-align:right;">1</div>
<div style="left:617px;top:421px;line-height:14px;font-size:12px;color:#000;white-space:pre;letter-spacing:0.22px;">Day</div>
<div style="left:657px;top:421px;line-height:14px;font-size:12px;color:#000;white-space:pre;letter-spacing:0.168px;">MUNICH</div>
<div style="left:757px;top:421px;line-height:14px;font-size:12px;color:#000;white-space:pre;letter-spacing:-0.002px;">PARIS</div>
<div style="left:856px;top:421px;line-height:14px;font-size:12px;color:#000;white-space:pre;width:88px;text-align:right;">0.00</div>
<div style="left:946px;top:421px;line-height:14px;font-size:12px;color:#000;white-space:pre;width:68px;text-align:right;">0.00</div>
<div style="left:1016px;top:421px;line-height:14px;font-size:12px;color:#000;white-space:pre;width:68px;text-align:right;">0.00</div>
<div style="left:1086px;top:421px;line-height:14px;font-size:12px;color:#000;white-space:pre;width:58px;text-align:right;">0.00</div>
<div style="left:13px;top:455px;width:1160px;height:1px;background:#C8733A;"></div>
<div style="left:27px;top:436px;width:1px;height:20px;background:#C8733A;"></div>
<div style="left:42px;top:436px;width:1px;height:20px;background:#C8733A;"></div>
<div style="left:57px;top:436px;width:1px;height:20px;background:#C8733A;"></div>
<div style="left:72px;top:436px;width:1px;height:20px;background:#C8733A;"></div>
<div style="left:87px;top:436px;width:1px;height:20px;background:#C8733A;"></div>
<div style="left:107px;top:436px;width:1px;height:20px;background:#C8733A;"></div>
<div style="left:127px;top:436px;width:1px;height:20px;background:#C8733A;"></div>
<div style="left:147px;top:436px;width:1px;height:20px;background:#C8733A;"></div>
<div style="left:222px;top:436px;width:1px;height:20px;background:#C8733A;"></div>
<div style="left:242px;top:436px;width:1px;height:20px;background:#C8733A;"></div>
<div style="left:287px;top:436px;width:1px;height:20px;background:#C8733A;"></div>
<div style="left:387px;top:436px;width:1px;height:20px;background:#C8733A;"></div>
<div style="left:530px;top:436px;width:1px;height:20px;background:#C8733A;"></div>
<div style="left:585px;top:436px;width:1px;height:20px;background:#C8733A;"></div>
<div style="left:615px;top:436px;width:1px;height:20px;background:#C8733A;"></div>
<div style="left:655px;top:436px;width:1px;height:20px;background:#C8733A;"></div>
<div style="left:755px;top:436px;width:1px;height:20px;background:#C8733A;"></div>
<div style="left:855px;top:436px;width:1px;height:20px;background:#C8733A;"></div>
<div style="left:945px;top:436px;width:1px;height:20px;background:#C8733A;"></div>
<div style="left:1015px;top:436px;width:1px;height:20px;background:#C8733A;"></div>
<div style="left:1085px;top:436px;width:1px;height:20px;background:#C8733A;"></div>
<div style="left:1145px;top:436px;width:1px;height:20px;background:#C8733A;"></div>
<div class="cb" style="left:14px;top:440px;"></div>
<svg style="left:14px;top:440px" width="13" height="13" viewBox="0 0 13 13"><path d="M3.1 5.1 H4.9 V7.3 L9.5 2.6 L10.2 3.4 L4.8 9.7 H3.1 Z" fill="#14181E"/></svg>
<div class="cb" style="left:29px;top:440px;"></div>
<svg style="left:29px;top:440px" width="13" height="13" viewBox="0 0 13 13"><path d="M3.1 5.1 H4.9 V7.3 L9.5 2.6 L10.2 3.4 L4.8 9.7 H3.1 Z" fill="#14181E"/></svg>
<div class="cb" style="left:44px;top:440px;"></div>
<div class="cb" style="left:59px;top:440px;"></div>
<div class="cb" style="left:74px;top:440px;"></div>
<div class="cb" style="left:91px;top:440px;"></div>
<div class="cb" style="left:111px;top:440px;"></div>
<div class="cb" style="left:131px;top:440px;"></div>
<div style="left:149px;top:440px;line-height:14px;font-size:12px;color:#000;white-space:pre;letter-spacing:0.205px;">Reserved</div>
<div class="cb" style="left:226px;top:440px;"></div>
<div style="left:244px;top:440px;line-height:14px;font-size:12px;color:#000;white-space:pre;letter-spacing:0.163px;">Rent</div>
<div style="left:289px;top:440px;line-height:14px;font-size:12px;color:#000;white-space:pre;letter-spacing:0.052px;">LG LED</div>
<div style="left:396px;top:440px;line-height:14px;font-size:12px;color:#000;white-space:pre;letter-spacing:0.052px;">LG LED</div>
<div style="left:532px;top:440px;line-height:14px;font-size:12px;color:#000;white-space:pre;">5d</div>
<div style="left:586px;top:440px;line-height:14px;font-size:12px;color:#000;white-space:pre;width:28px;text-align:right;">1</div>
<div style="left:617px;top:440px;line-height:14px;font-size:12px;color:#000;white-space:pre;letter-spacing:0.22px;">Day</div>
<div style="left:657px;top:440px;line-height:14px;font-size:12px;color:#000;white-space:pre;letter-spacing:-0.002px;">COLOGNE</div>
<div style="left:757px;top:440px;line-height:14px;font-size:12px;color:#000;white-space:pre;letter-spacing:-0.002px;">PARIS</div>
<div style="left:856px;top:440px;line-height:14px;font-size:12px;color:#000;white-space:pre;width:88px;text-align:right;">0.00</div>
<div style="left:946px;top:440px;line-height:14px;font-size:12px;color:#000;white-space:pre;width:68px;text-align:right;">0.00</div>
<div style="left:1016px;top:440px;line-height:14px;font-size:12px;color:#000;white-space:pre;width:68px;text-align:right;">0.00</div>
<div style="left:1086px;top:440px;line-height:14px;font-size:12px;color:#000;white-space:pre;width:58px;text-align:right;">0.00</div>
<div style="left:13px;top:474px;width:1160px;height:1px;background:#C8733A;"></div>
<div style="left:27px;top:455px;width:1px;height:20px;background:#C8733A;"></div>
<div style="left:42px;top:455px;width:1px;height:20px;background:#C8733A;"></div>
<div style="left:57px;top:455px;width:1px;height:20px;background:#C8733A;"></div>
<div style="left:72px;top:455px;width:1px;height:20px;background:#C8733A;"></div>
<div style="left:87px;top:455px;width:1px;height:20px;background:#C8733A;"></div>
<div style="left:107px;top:455px;width:1px;height:20px;background:#C8733A;"></div>
<div style="left:127px;top:455px;width:1px;height:20px;background:#C8733A;"></div>
<div style="left:147px;top:455px;width:1px;height:20px;background:#C8733A;"></div>
<div style="left:222px;top:455px;width:1px;height:20px;background:#C8733A;"></div>
<div style="left:242px;top:455px;width:1px;height:20px;background:#C8733A;"></div>
<div style="left:287px;top:455px;width:1px;height:20px;background:#C8733A;"></div>
<div style="left:387px;top:455px;width:1px;height:20px;background:#C8733A;"></div>
<div style="left:530px;top:455px;width:1px;height:20px;background:#C8733A;"></div>
<div style="left:585px;top:455px;width:1px;height:20px;background:#C8733A;"></div>
<div style="left:615px;top:455px;width:1px;height:20px;background:#C8733A;"></div>
<div style="left:655px;top:455px;width:1px;height:20px;background:#C8733A;"></div>
<div style="left:755px;top:455px;width:1px;height:20px;background:#C8733A;"></div>
<div style="left:855px;top:455px;width:1px;height:20px;background:#C8733A;"></div>
<div style="left:945px;top:455px;width:1px;height:20px;background:#C8733A;"></div>
<div style="left:1015px;top:455px;width:1px;height:20px;background:#C8733A;"></div>
<div style="left:1085px;top:455px;width:1px;height:20px;background:#C8733A;"></div>
<div style="left:1145px;top:455px;width:1px;height:20px;background:#C8733A;"></div>
<div class="cb" style="left:14px;top:459px;"></div>
<svg style="left:14px;top:459px" width="13" height="13" viewBox="0 0 13 13"><path d="M3.1 5.1 H4.9 V7.3 L9.5 2.6 L10.2 3.4 L4.8 9.7 H3.1 Z" fill="#14181E"/></svg>
<div class="cb" style="left:29px;top:459px;"></div>
<svg style="left:29px;top:459px" width="13" height="13" viewBox="0 0 13 13"><path d="M3.1 5.1 H4.9 V7.3 L9.5 2.6 L10.2 3.4 L4.8 9.7 H3.1 Z" fill="#14181E"/></svg>
<div class="cb" style="left:44px;top:459px;"></div>
<div class="cb" style="left:59px;top:459px;"></div>
<div class="cb" style="left:74px;top:459px;"></div>
<div class="cb" style="left:91px;top:459px;"></div>
<div class="cb" style="left:111px;top:459px;"></div>
<div class="cb" style="left:131px;top:459px;"></div>
<div style="left:149px;top:459px;line-height:14px;font-size:12px;color:#000;white-space:pre;letter-spacing:0.205px;">Reserved</div>
<div class="cb" style="left:226px;top:459px;"></div>
<div style="left:244px;top:459px;line-height:14px;font-size:12px;color:#000;white-space:pre;letter-spacing:0.163px;">Rent</div>
<div style="left:289px;top:459px;line-height:14px;font-size:12px;color:#000;white-space:pre;letter-spacing:0.052px;">LG LED</div>
<div style="left:396px;top:459px;line-height:14px;font-size:12px;color:#000;white-space:pre;letter-spacing:0.052px;">LG LED</div>
<div style="left:532px;top:459px;line-height:14px;font-size:12px;color:#000;white-space:pre;">5d</div>
<div style="left:586px;top:459px;line-height:14px;font-size:12px;color:#000;white-space:pre;width:28px;text-align:right;">1</div>
<div style="left:617px;top:459px;line-height:14px;font-size:12px;color:#000;white-space:pre;letter-spacing:0.22px;">Day</div>
<div style="left:657px;top:459px;line-height:14px;font-size:12px;color:#000;white-space:pre;letter-spacing:0.04px;">BUDAPEST</div>
<div style="left:757px;top:459px;line-height:14px;font-size:12px;color:#000;white-space:pre;letter-spacing:-0.002px;">PARIS</div>
<div style="left:856px;top:459px;line-height:14px;font-size:12px;color:#000;white-space:pre;width:88px;text-align:right;">0.00</div>
<div style="left:946px;top:459px;line-height:14px;font-size:12px;color:#000;white-space:pre;width:68px;text-align:right;">0.00</div>
<div style="left:1016px;top:459px;line-height:14px;font-size:12px;color:#000;white-space:pre;width:68px;text-align:right;">0.00</div>
<div style="left:1086px;top:459px;line-height:14px;font-size:12px;color:#000;white-space:pre;width:58px;text-align:right;">0.00</div>
<div style="left:13px;top:493px;width:1160px;height:1px;background:#C8733A;"></div>
<div style="left:27px;top:474px;width:1px;height:20px;background:#C8733A;"></div>
<div style="left:42px;top:474px;width:1px;height:20px;background:#C8733A;"></div>
<div style="left:57px;top:474px;width:1px;height:20px;background:#C8733A;"></div>
<div style="left:72px;top:474px;width:1px;height:20px;background:#C8733A;"></div>
<div style="left:87px;top:474px;width:1px;height:20px;background:#C8733A;"></div>
<div style="left:107px;top:474px;width:1px;height:20px;background:#C8733A;"></div>
<div style="left:127px;top:474px;width:1px;height:20px;background:#C8733A;"></div>
<div style="left:147px;top:474px;width:1px;height:20px;background:#C8733A;"></div>
<div style="left:222px;top:474px;width:1px;height:20px;background:#C8733A;"></div>
<div style="left:242px;top:474px;width:1px;height:20px;background:#C8733A;"></div>
<div style="left:287px;top:474px;width:1px;height:20px;background:#C8733A;"></div>
<div style="left:387px;top:474px;width:1px;height:20px;background:#C8733A;"></div>
<div style="left:530px;top:474px;width:1px;height:20px;background:#C8733A;"></div>
<div style="left:585px;top:474px;width:1px;height:20px;background:#C8733A;"></div>
<div style="left:615px;top:474px;width:1px;height:20px;background:#C8733A;"></div>
<div style="left:655px;top:474px;width:1px;height:20px;background:#C8733A;"></div>
<div style="left:755px;top:474px;width:1px;height:20px;background:#C8733A;"></div>
<div style="left:855px;top:474px;width:1px;height:20px;background:#C8733A;"></div>
<div style="left:945px;top:474px;width:1px;height:20px;background:#C8733A;"></div>
<div style="left:1015px;top:474px;width:1px;height:20px;background:#C8733A;"></div>
<div style="left:1085px;top:474px;width:1px;height:20px;background:#C8733A;"></div>
<div style="left:1145px;top:474px;width:1px;height:20px;background:#C8733A;"></div>
<div class="cb" style="left:14px;top:478px;"></div>
<svg style="left:14px;top:478px" width="13" height="13" viewBox="0 0 13 13"><path d="M3.1 5.1 H4.9 V7.3 L9.5 2.6 L10.2 3.4 L4.8 9.7 H3.1 Z" fill="#14181E"/></svg>
<div class="cb" style="left:29px;top:478px;"></div>
<svg style="left:29px;top:478px" width="13" height="13" viewBox="0 0 13 13"><path d="M3.1 5.1 H4.9 V7.3 L9.5 2.6 L10.2 3.4 L4.8 9.7 H3.1 Z" fill="#14181E"/></svg>
<div class="cb" style="left:44px;top:478px;"></div>
<div class="cb" style="left:59px;top:478px;"></div>
<div class="cb" style="left:74px;top:478px;"></div>
<div class="cb" style="left:91px;top:478px;"></div>
<div class="cb" style="left:111px;top:478px;"></div>
<div class="cb" style="left:131px;top:478px;"></div>
<div style="left:149px;top:478px;line-height:14px;font-size:12px;color:#000;white-space:pre;letter-spacing:0.205px;">Reserved</div>
<div class="cb" style="left:226px;top:478px;"></div>
<div style="left:244px;top:478px;line-height:14px;font-size:12px;color:#000;white-space:pre;letter-spacing:0.163px;">Rent</div>
<div style="left:289px;top:478px;line-height:14px;font-size:12px;color:#000;white-space:pre;letter-spacing:0.052px;">LG LED</div>
<div style="left:396px;top:478px;line-height:14px;font-size:12px;color:#000;white-space:pre;letter-spacing:0.052px;">LG LED</div>
<div style="left:532px;top:478px;line-height:14px;font-size:12px;color:#000;white-space:pre;">5d</div>
<div style="left:586px;top:478px;line-height:14px;font-size:12px;color:#000;white-space:pre;width:28px;text-align:right;">1</div>
<div style="left:617px;top:478px;line-height:14px;font-size:12px;color:#000;white-space:pre;letter-spacing:0.22px;">Day</div>
<div style="left:657px;top:478px;line-height:14px;font-size:12px;color:#000;white-space:pre;letter-spacing:0.109px;">BERLIN</div>
<div style="left:757px;top:478px;line-height:14px;font-size:12px;color:#000;white-space:pre;letter-spacing:-0.002px;">PARIS</div>
<div style="left:856px;top:478px;line-height:14px;font-size:12px;color:#000;white-space:pre;width:88px;text-align:right;">0.00</div>
<div style="left:946px;top:478px;line-height:14px;font-size:12px;color:#000;white-space:pre;width:68px;text-align:right;">0.00</div>
<div style="left:1016px;top:478px;line-height:14px;font-size:12px;color:#000;white-space:pre;width:68px;text-align:right;">0.00</div>
<div style="left:1086px;top:478px;line-height:14px;font-size:12px;color:#000;white-space:pre;width:58px;text-align:right;">0.00</div>
<div style="left:13px;top:512px;width:1160px;height:1px;background:#C8733A;"></div>
<div style="left:27px;top:493px;width:1px;height:20px;background:#C8733A;"></div>
<div style="left:42px;top:493px;width:1px;height:20px;background:#C8733A;"></div>
<div style="left:57px;top:493px;width:1px;height:20px;background:#C8733A;"></div>
<div style="left:72px;top:493px;width:1px;height:20px;background:#C8733A;"></div>
<div style="left:87px;top:493px;width:1px;height:20px;background:#C8733A;"></div>
<div style="left:107px;top:493px;width:1px;height:20px;background:#C8733A;"></div>
<div style="left:127px;top:493px;width:1px;height:20px;background:#C8733A;"></div>
<div style="left:147px;top:493px;width:1px;height:20px;background:#C8733A;"></div>
<div style="left:222px;top:493px;width:1px;height:20px;background:#C8733A;"></div>
<div style="left:242px;top:493px;width:1px;height:20px;background:#C8733A;"></div>
<div style="left:287px;top:493px;width:1px;height:20px;background:#C8733A;"></div>
<div style="left:387px;top:493px;width:1px;height:20px;background:#C8733A;"></div>
<div style="left:530px;top:493px;width:1px;height:20px;background:#C8733A;"></div>
<div style="left:585px;top:493px;width:1px;height:20px;background:#C8733A;"></div>
<div style="left:615px;top:493px;width:1px;height:20px;background:#C8733A;"></div>
<div style="left:655px;top:493px;width:1px;height:20px;background:#C8733A;"></div>
<div style="left:755px;top:493px;width:1px;height:20px;background:#C8733A;"></div>
<div style="left:855px;top:493px;width:1px;height:20px;background:#C8733A;"></div>
<div style="left:945px;top:493px;width:1px;height:20px;background:#C8733A;"></div>
<div style="left:1015px;top:493px;width:1px;height:20px;background:#C8733A;"></div>
<div style="left:1085px;top:493px;width:1px;height:20px;background:#C8733A;"></div>
<div style="left:1145px;top:493px;width:1px;height:20px;background:#C8733A;"></div>
<div class="cb" style="left:14px;top:497px;"></div>
<svg style="left:14px;top:497px" width="13" height="13" viewBox="0 0 13 13"><path d="M3.1 5.1 H4.9 V7.3 L9.5 2.6 L10.2 3.4 L4.8 9.7 H3.1 Z" fill="#14181E"/></svg>
<div class="cb" style="left:29px;top:497px;"></div>
<svg style="left:29px;top:497px" width="13" height="13" viewBox="0 0 13 13"><path d="M3.1 5.1 H4.9 V7.3 L9.5 2.6 L10.2 3.4 L4.8 9.7 H3.1 Z" fill="#14181E"/></svg>
<div class="cb" style="left:44px;top:497px;"></div>
<div class="cb" style="left:59px;top:497px;"></div>
<div class="cb" style="left:74px;top:497px;"></div>
<div class="cb" style="left:91px;top:497px;"></div>
<div class="cb" style="left:111px;top:497px;"></div>
<div class="cb" style="left:131px;top:497px;"></div>
<div style="left:149px;top:497px;line-height:14px;font-size:12px;color:#000;white-space:pre;letter-spacing:0.205px;">Reserved</div>
<div class="cb" style="left:226px;top:497px;"></div>
<div style="left:244px;top:497px;line-height:14px;font-size:12px;color:#000;white-space:pre;letter-spacing:0.163px;">Rent</div>
<div style="left:289px;top:497px;line-height:14px;font-size:12px;color:#000;white-space:pre;letter-spacing:0.052px;">LG LED</div>
<div style="left:396px;top:497px;line-height:14px;font-size:12px;color:#000;white-space:pre;letter-spacing:0.052px;">LG LED</div>
<div style="left:532px;top:497px;line-height:14px;font-size:12px;color:#000;white-space:pre;">5d</div>
<div style="left:586px;top:497px;line-height:14px;font-size:12px;color:#000;white-space:pre;width:28px;text-align:right;">1</div>
<div style="left:617px;top:497px;line-height:14px;font-size:12px;color:#000;white-space:pre;letter-spacing:0.22px;">Day</div>
<div style="left:657px;top:497px;line-height:14px;font-size:12px;color:#000;white-space:pre;letter-spacing:-0.002px;">PARIS</div>
<div style="left:757px;top:497px;line-height:14px;font-size:12px;color:#000;white-space:pre;letter-spacing:-0.002px;">PARIS</div>
<div style="left:856px;top:497px;line-height:14px;font-size:12px;color:#000;white-space:pre;width:88px;text-align:right;">0.00</div>
<div style="left:946px;top:497px;line-height:14px;font-size:12px;color:#000;white-space:pre;width:68px;text-align:right;">0.00</div>
<div style="left:1016px;top:497px;line-height:14px;font-size:12px;color:#000;white-space:pre;width:68px;text-align:right;">0.00</div>
<div style="left:1086px;top:497px;line-height:14px;font-size:12px;color:#000;white-space:pre;width:58px;text-align:right;">0.00</div>
<div style="left:587px;top:418px;width:28px;height:18px;border:1px solid #F41410;"></div>
<div style="left:585px;top:397px;width:272px;height:117px;border:2px solid #C0060E;"></div>
<div style="left:13px;top:631px;width:1160px;height:1px;background:#6F869C;"></div>
<div style="left:13px;top:632px;width:1160px;height:16px;background:#EEEEEE;border-top:1px solid #C8DCF0;border-bottom:1px solid #C8DCF0;box-shadow:inset 0 -1px 0 #6F869C;"></div>
<div style="left:13px;top:632px;width:15px;height:16px;background:#EEEEEE;border-top:1px solid #fff;border-left:2px solid #fff;border-bottom:1px solid #fff;box-shadow:inset 0 -1px 0 #6F869C;"></div>
<svg style="left:19px;top:636px" width="5" height="8" viewBox="0 0 5 8"><polygon points="4.5,0 4.5,8 0.2,4" fill="#222"/></svg>
<div style="left:1156px;top:632px;width:17px;height:16px;background:#EEEEEE;border-top:1px solid #fff;border-left:1px solid #6F869C;border-right:1px solid #fff;border-bottom:1px solid #fff;box-shadow:inset -1px -1px 0 #6F869C;"></div>
<svg style="left:1162px;top:636px" width="5" height="8" viewBox="0 0 5 8"><polygon points="0.5,0 0.5,8 4.8,4" fill="#222"/></svg>
<div style="left:28px;top:631px;width:569px;height:16px;background:linear-gradient(90deg,rgba(255,255,255,0.18) 0,rgba(255,255,255,0) 40px,rgba(255,255,255,0) calc(100% - 40px),rgba(214,120,60,0.22) 100%),linear-gradient(180deg,#F2C4A6 0%,#EDB48E 40%,#E8A274 100%);border:1px solid #FFC000;box-shadow:inset 0 1px 0 #E8A46E,inset 1px 0 0 #F2B070;"></div>
<div style="left:310px;top:635px;width:1px;height:8px;background:#A88A78;"></div>
<div style="left:312px;top:635px;width:1px;height:8px;background:#A88A78;"></div>
<div style="left:314px;top:635px;width:1px;height:8px;background:#A88A78;"></div>
<div style="left:70px;top:662px;line-height:16px;font-size:14px;color:#1A1A2A;white-space:pre;font-weight:bold;">Items</div>
<div style="left:120px;top:657px;width:100px;height:24px;background:#EEEEEE;border:1px solid #828282;"></div>
<div style="left:235px;top:662px;line-height:16px;font-size:14px;color:#1A1A2A;white-space:pre;font-weight:bold;">Labor</div>
<div style="left:287px;top:657px;width:100px;height:24px;background:#EEEEEE;border:1px solid #828282;"></div>
<div style="left:446px;top:662px;line-height:16px;font-size:14px;color:#1A1A2A;white-space:pre;font-weight:bold;">Sub Total</div>
<div style="left:525px;top:657px;width:100px;height:24px;background:#EEEEEE;border:1px solid #828282;"></div>
<div style="left:636px;top:662px;line-height:16px;font-size:14px;color:#1A1A2A;white-space:pre;font-weight:bold;">Tax</div>
<div style="left:670px;top:657px;width:100px;height:24px;background:#EEEEEE;border:1px solid #828282;"></div>
<div style="left:814px;top:657px;width:88px;height:23px;background:#fff;border:1px solid #C8C8C8;"></div>
<div style="left:814px;top:662px;line-height:16px;font-size:14px;color:#1A1A2A;white-space:pre;font-weight:bold;width:88px;text-align:center;">Total</div>
<div style="left:906px;top:657px;width:100px;height:24px;background:#EEEEEE;border:1px solid #828282;"></div>
<div style="left:908px;top:661px;line-height:16px;font-size:14px;color:#111;white-space:pre;font-weight:bold;">0.00</div>
<div style="left:8px;top:691px;width:1172px;height:25px;background:#fff;border-top:1px solid #C8C8C8;border-left:1px solid #C8C8C8;border-bottom:1px solid #EEF2F2;border-right:1px solid #EEF2F2;box-shadow:inset 1px 1px 0 #808080,inset -1px -1px 0 #B8B8B8;"></div>
</div></body></html>
